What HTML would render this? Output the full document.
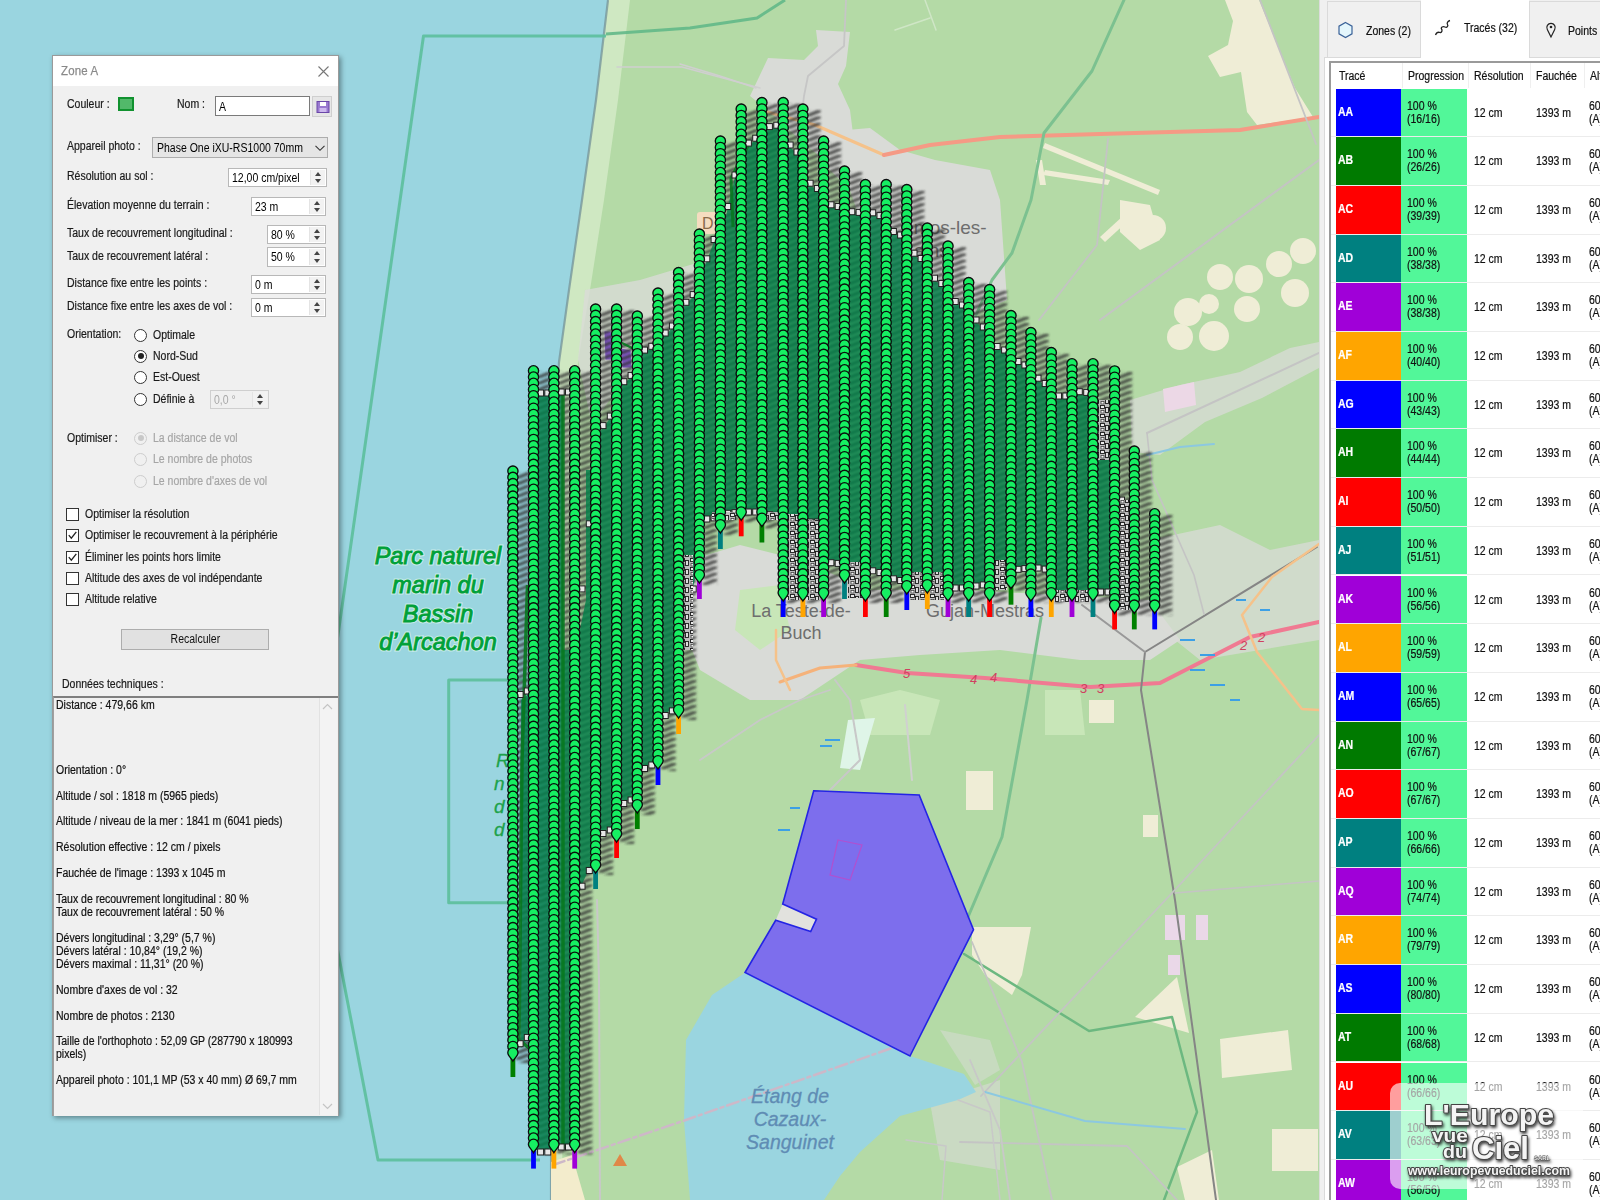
<!DOCTYPE html>
<html><head><meta charset="utf-8"><style>
*{margin:0;padding:0;box-sizing:border-box}
html,body{width:1600px;height:1200px;overflow:hidden;background:#b4daa6;font-family:"Liberation Sans",sans-serif}

#dlg{position:absolute;left:52px;top:55px;width:287px;height:1061px;background:#f0f0f0;border:1px solid #9a9a9a;box-shadow:2px 2px 5px rgba(0,0,0,0.38)}
#dlg .title{position:absolute;left:0;top:0;width:285px;height:30px;background:#fff;color:#8a8a8a;font-size:13px;padding:7px 0 0 8px;letter-spacing:0.2px}
#dlg .title span{display:inline-block;transform:scaleX(0.88);transform-origin:0 0;-webkit-text-stroke:0.25px #8a8a8a}
.sx{display:inline-block;transform:scaleX(0.875);transform-origin:0 0;white-space:nowrap}
.sx2{display:inline-block;transform:scaleX(0.875);white-space:nowrap}
.lbl{position:absolute;font-size:12px;color:#1a1a1a;-webkit-text-stroke:0.2px #1a1a1a;white-space:nowrap;line-height:15px;transform:scaleX(0.875);transform-origin:0 0}
.dlbl{color:#a6a6a6;-webkit-text-stroke:0.2px #a6a6a6}
.spin{position:absolute;border:1px solid #b8b8b8;font-size:12px}
.spin span{position:absolute;left:3px;top:2px}
.spin .sb{position:absolute;right:1px;top:1px;width:15px;bottom:1px;border-left:1px solid #e4e4e4;background:#f2f2f2}
.spin .up{position:absolute;left:4px;top:2px;width:0;height:0;border-left:3.5px solid transparent;border-right:3.5px solid transparent;border-bottom:4px solid #444}
.spin .dn{position:absolute;left:4px;bottom:2px;width:0;height:0;border-left:3.5px solid transparent;border-right:3.5px solid transparent;border-top:4px solid #444}
.tb{position:absolute;border:1px solid #7a7a7a;background:#fff;font-size:12px}
.tb span{position:absolute;left:3px;top:3px}
.combo{position:absolute;border:1px solid #adadad;background:#e5e5e5;font-size:12px}
.combo span{position:absolute;left:4px;top:3px}
.radio{position:absolute;width:13px;height:13px;border:1px solid #333;border-radius:50%;background:#fff}
.radio b{position:absolute;left:2.5px;top:2.5px;width:6px;height:6px;border-radius:50%;background:#222}
.radio.dis{border-color:#cdcdcd;background:#f0f0f0}
.radio.dis b{background:#c8c8c8}
.chk{position:absolute;width:13px;height:13px;border:1px solid #333;background:#fff}
.btn{position:absolute;border:1px solid #adadad;background:#e1e1e1;font-size:12px;text-align:center;line-height:19px;color:#111}
#techbox{position:absolute;left:53px;top:696px;width:285px;height:420px;border-top:2px solid #7f7f7f;border-left:1px solid #a0a0a0;background:#f0f0f0}
#tech{position:absolute;left:56px;top:699px;width:320px;font-size:12px;line-height:12.93px;color:#111;-webkit-text-stroke:0.2px #111;white-space:nowrap;transform:scaleX(0.875);transform-origin:0 0}


#panel{position:absolute;left:1319px;top:0;width:281px;height:1200px;background:#f0f0f0;border-left:1px solid #dcdcdc}
.tab{position:absolute;top:1px;height:56px;background:#f0f0f0;border:1px solid #dadada;border-bottom:none}
.tab span{position:absolute;font-size:12px;color:#111;-webkit-text-stroke:0.2px #111}
.tab.act{background:#fff;height:58px;top:0;border-color:#fff;z-index:2}
#tpanel{position:absolute;left:1324px;top:57px;width:280px;height:1143px;background:#fff;border-left:1px solid #dadada;border-top:1px solid #dadada}
#tbl{position:absolute;left:1329px;top:61px;width:280px;height:1139px;background:#fff;border-left:2px solid #9a9a9a;border-top:2px solid #9a9a9a;overflow:hidden}
.hd{position:absolute;top:6px;font-size:12px;color:#111;-webkit-text-stroke:0.2px #111;white-space:nowrap;transform:scaleX(0.875);transform-origin:0 0}
.vl{position:absolute;top:0;width:1px;height:25px;background:#efefef}
.row{position:absolute;left:0;width:280px;height:48.7px;border-bottom:1px solid #ececec}
.row > div{position:absolute;top:0;height:47.7px;font-size:12px;white-space:nowrap;-webkit-text-stroke:0.2px currentColor}
.c0{left:5px;width:65px;color:#fff;font-weight:bold;padding:16px 0 0 2px}
.c1{left:70px;width:66px;background:#52f799;color:#111;padding:11px 0 0 6px;line-height:13px}
.c2{left:137px;width:62px;padding:17px 0 0 6px;color:#111}
.c3{left:199px;width:54px;padding:17px 0 0 6px;color:#111}
.c4{left:253px;width:40px;padding:11px 0 0 5px;line-height:13px;color:#111}
#wm{position:absolute;left:1390px;top:1083px;width:210px;height:110px}
.wmbox{position:absolute;left:0;top:0;width:193px;height:106px;background:rgba(255,255,255,0.62);border-radius:10px}

</style></head>
<body>
<svg width="1319" height="1200" viewBox="0 0 1319 1200" style="position:absolute;left:0;top:0">
<defs>
<pattern id="mk" width="10" height="9" patternUnits="userSpaceOnUse"><rect width="10" height="9" fill="#bdbdbd"/><rect x="0.5" y="0.5" width="4" height="3" fill="#ececec" stroke="#1a1a1a" stroke-width="0.9"/><rect x="5.5" y="2.5" width="3" height="5" fill="#dcdcdc" stroke="#1a1a1a" stroke-width="0.9"/><rect x="1" y="5.5" width="3" height="2.5" fill="#f4f4f4" stroke="#333" stroke-width="0.7"/></pattern>
<pattern id="shpat" width="14" height="6.25" patternUnits="userSpaceOnUse">
<ellipse cx="6.5" cy="3.1" rx="5.2" ry="2.8" fill="#2a2a2a" fill-opacity="0.8" transform="rotate(-20 6.5 3.1)"/>
</pattern>
<filter id="soft1" x="-2%" y="-2%" width="104%" height="104%"><feGaussianBlur stdDeviation="0.35"/></filter>
<filter id="blur1" x="-10%" y="-2%" width="120%" height="104%"><feGaussianBlur stdDeviation="1.1"/></filter>
</defs>
<rect width="1319" height="1200" fill="#b4daa6"/>
<!-- sea -->
<path d="M0 0 L608 0 L596 100 L582 200 L569 290 L559 362 L554 450 L552 600 L551 1200 L0 1200Z" fill="#9ad5e0"/>
<!-- beach strip -->
<path d="M608 0 L630 0 L618 100 L604 200 L590 290 L578 362 L570 450 L566 600 L564 900 L562 1200 L551 1200 L552 600 L554 450 L559 362 L569 290 L582 200 L596 100Z" fill="#cfe8c2"/>
<path d="M608 0 L596 100 L582 200 L569 290 L559 362 L554 450 L552 600 L551 1200" fill="none" stroke="#74939a" stroke-width="2.2" opacity="0.75"/>
<path d="M551 1162 L572 1155 L585 1200 L551 1200Z" fill="#f3eccc"/>
<!-- park outline -->
<g fill="none" stroke="#5cbf9c" stroke-width="3" opacity="0.9" stroke-linejoin="round">
<path d="M606 36 L423.5 36 L312 817 L378 1160 L540 1160"/>
<path d="M540 680 L448.7 680 L448.7 902.7 L540 902.7"/>
</g>
<path d="M606 34 L690 28 L757 18 L785 0" fill="none" stroke="#62b888" stroke-width="3" opacity="0.9"/>
<g font-family="Liberation Sans" font-style="italic" font-size="19" fill="#1da24a" stroke="#1da24a" stroke-width="0.3"><text x="496" y="767">R</text><text x="494" y="790">n</text><text x="494" y="813">d</text><text x="494" y="836">d</text></g>
<g font-family="Liberation Sans" font-style="italic" font-size="23.5" fill="none" stroke="#dff5ee" stroke-opacity="0.7" stroke-width="3" text-anchor="middle">
<text x="438" y="563.5">Parc naturel</text>
<text x="438" y="593">marin du</text>
<text x="438" y="621.5">Bassin</text>
<text x="438" y="650">d’Arcachon</text>
</g><g font-family="Liberation Sans" font-style="italic" font-size="23.5" fill="#00a038" stroke="#00a038" stroke-width="0.9" text-anchor="middle">
<text x="438" y="563.5">Parc naturel</text>
<text x="438" y="593">marin du</text>
<text x="438" y="621.5">Bassin</text>
<text x="438" y="650">d’Arcachon</text>
</g>
<!-- urban grey -->
<g fill="#d9dbd7">
<path d="M750 96 L768 58 L804 60 L818 46 L816 30 L850 32 L846 66 L838 84 L850 110 L855 150 L830 165 L800 140 L770 112Z"/>
<path d="M824 132 L870 128 L900 150 L935 160 L990 170 L1000 200 L1007 300 L960 320 L905 300 L870 250 L850 190 L830 170Z"/>
<path d="M690 560 L740 545 L800 560 L870 590 L960 590 L1060 595 L1150 600 L1180 640 L1150 660 L1080 660 L1000 650 L920 655 L860 660 L800 700 L750 700 L700 670 L680 620Z"/>
<path d="M1130 400 L1180 385 L1240 372 L1290 348 L1319 342 L1319 368 L1262 398 L1205 422 L1160 455 L1132 452Z" opacity="0.75"/><path d="M1150 540 L1220 525 L1270 550 L1319 540 L1319 640 L1200 660 L1150 620Z" opacity="0.75"/>
<path d="M1163 389 L1194 382 L1196 405 L1165 412Z" fill="#ecd8e6"/>
<path d="M585 290 L640 280 L700 262 L722 245 L715 300 L660 340 L620 385 L592 425 L578 360Z" opacity="0.8"/>
<path d="M930 1102 L1000 1080 L1000 1170 L940 1160Z" opacity="0.6"/><path d="M940 1030 L990 1040 L1000 1070 L975 1085Z" opacity="0.5"/><path d="M1165 915 L1185 915 L1185 940 L1165 940Z M1168 955 L1180 955 L1180 975 L1168 975Z M1196 915 L1208 915 L1208 940 L1196 940Z" fill="#ead8e8"/>
<path d="M780 1060 L830 1040 L850 1090 L800 1100Z" opacity="0.4"/>
</g>
<!-- light green patches -->
<g fill="#c8e6b8">
<path d="M740 590 L780 585 L790 630 L760 650 L735 630Z"/>
<path d="M860 700 L900 690 L940 700 L930 735 L870 735Z"/>
<path d="M1045 690 L1080 690 L1085 735 L1045 735Z"/>
</g>
<path d="M848 720 L875 718 L860 770 L840 768Z" fill="#dff5e8"/>
<!-- cream areas -->
<g fill="#efedd6">
<path d="M1225 0 L1259 0 L1295 88 L1313 117 L1257 125 L1247 112 L1241 72 L1220 77 L1208 56 L1228 45 L1233 21Z"/>
<circle cx="1220" cy="277" r="13"/><circle cx="1249" cy="279" r="14"/><circle cx="1279" cy="264" r="13"/><circle cx="1303" cy="251" r="13"/><circle cx="1295" cy="293" r="14"/>
<circle cx="1188" cy="312" r="14"/><circle cx="1209" cy="304" r="10"/><circle cx="1247" cy="309" r="13"/><circle cx="1214" cy="336" r="15"/><circle cx="1180" cy="337" r="13"/>
<circle cx="1153" cy="228" r="13"/>
<path d="M1120 200 L1150 205 L1160 240 L1140 250 L1120 232Z"/>
<path d="M1045 143 L1160 190 L1158 195 L1043 148Z"/>
<path d="M1045 170 L1110 180 L1108 185 L1043 175Z"/>
<path d="M1042 160 L1046 185 L1040 185 L1036 160Z"/>
<path d="M1100 237 L1135 205 L1140 210 L1105 242Z"/>
<rect x="966" y="771" width="27" height="39"/>
<path d="M972 927 L1031 927 L1022 975 L1012 995 L985 975 L972 955Z"/><rect x="1143" y="815" width="15" height="22"/><rect x="1089" y="700" width="25" height="23"/><path d="M1135 1017 L1177 977 L1189 1033Z"/><rect x="1272" y="1129" width="46" height="42"/><path d="M1177 1167 L1212 1150 L1219 1200 L1185 1200Z"/>
<path d="M1220 1039 L1288 1030 L1292 1070 L1222 1078Z"/>


</g>
<!-- lagoon -->
<path d="M746 972 L910 1056 L964 1074 L976 1092 L958 1100 L900 1116 L860 1152 L840 1176 L824 1200 L690 1200 L684 1120 L686 1040 L712 995Z" fill="#9ad5e0"/>
<!-- roads -->
<g fill="none" stroke-linecap="round" stroke-linejoin="round">
<path d="M760 110 L815 125 L884 155" stroke="#f5c28a" stroke-width="3"/>
<path d="M884 155 L930 145 L1000 137 L1100 134 L1240 130 L1319 117" stroke="#f59a85" stroke-width="4"/>
<path d="M1124 0 L1092 71 L1044 133 L1031 200 L1012 253 L992 280 L960 350 L935 410" stroke="#7cc190" stroke-width="3"/>
<path d="M1041 618 L1027 700 L1002 837 L968 917" stroke="#7cc190" stroke-width="3"/>
<path d="M964 954 L1089 1031 L1172 1017 L1197 1112 L1164 1200" stroke="#6cb880" stroke-width="2.5"/>
<path d="M856 665 L907 673 L985 678 L1090 687 L1160 683 L1250 637 L1319 622" stroke="#f07a92" stroke-width="4"/>
<path d="M780 682 L820 668 L856 665" stroke="#f5b27a" stroke-width="3"/>
<path d="M776 630 L776 660 L790 690" stroke="#f5c28a" stroke-width="2.5"/>
<path d="M1317 547 L1145 652 L1141 690 L1175 900 L1216 1200" stroke="#858585" stroke-width="2"/>
<path d="M1082 605 L1145 652" stroke="#999" stroke-width="2"/>
<path d="M1319 544 L1272 577 L1242 615 L1257 652 L1302 709 L1319 710" stroke="#f5c28a" stroke-width="2.5"/>
<path d="M1319 160 L1100 320" stroke="#c4c4c4" stroke-width="2"/>
<path d="M1260 0 L1316 144" stroke="#c4c4c4" stroke-width="1.8"/>
<path d="M1108 139 L1097 245 L1039 320" stroke="#c4c4c4" stroke-width="1.8"/>
<path d="M1319 735 L1172 893 L981 1096" stroke="#c4c4c4" stroke-width="1.8"/><path d="M972 942 L1022 1062 L1052 1200" stroke="#c4c4c4" stroke-width="1.8"/><path d="M960 1142 L1127 1146 L1177 1200" stroke="#c4c4c4" stroke-width="1.8"/><path d="M985 1092 L1085 1121 L1185 1129" stroke="#8cc8e0" stroke-width="2"/>
<path d="M1175 893 L1319 881" stroke="#c4c4c4" stroke-width="1.5"/>
<path d="M1147 433 L1319 353" stroke="#c4c4c4" stroke-width="2"/><path d="M1147 433 L1152 480 L1194 575 L1204 614" stroke="#c4c4c4" stroke-width="1.6"/><path d="M1147 455 L1180 447 L1214 444" stroke="#8cc8e0" stroke-width="2"/>
<path d="M553 1165 L680 1122 L892 1048" stroke="#cdb8c8" stroke-width="2.5" stroke-dasharray="12 4 3 4"/>
<path d="M905 705 L912 780" stroke="#d0d0d0" stroke-width="2"/><path d="M597 900 L599 980 L600 1200" stroke="#c8c8c8" stroke-width="2"/>
<path d="M835 680 L850 700 L860 760 L830 790" stroke="#c8c8c8" stroke-width="2"/>
<path d="M700 760 L760 720 L800 700 L830 690" stroke="#c8c8c8" stroke-width="1.8"/>
<path d="M617 67 L682 67 L760 88" stroke="#cfcfcf" stroke-width="1.5"/>
<path d="M846 0 L844 46 L808 76 L804 96 L800 130" stroke="#c6c6c6" stroke-width="1.8"/><path d="M680 64 L720 76 L756 88" stroke="#cfcfcf" stroke-width="1.5"/><path d="M925 0 L936 30 M895 30 L930 18" stroke="#cfe6c6" stroke-width="1.5"/>
<path d="M970 1060 L1000 1130 L1010 1200" stroke="#c8c8c8" stroke-width="1.8"/>
<path d="M906 1140 L946 1146 L942 1200 M958 1100 L990 1112 L1000 1200" stroke="#c8c8c8" stroke-width="1.5"/>
</g>
<!-- blue streams -->
<g stroke="#3ca0e6" stroke-width="2" fill="none">
<path d="M1180 640 L1195 640 M1200 655 L1215 655 M1190 670 L1205 670 M1210 685 L1225 685 M1230 700 L1240 700 M1236 600 L1246 600 M1260 610 L1270 610"/>
<path d="M825 740 L840 740 M820 746 L832 746 M790 808 L800 808 M778 830 L790 830"/>
</g>
<!-- blue polygon -->
<path d="M782.7 904 L816.5 919.2 L810.7 931.5 L775.7 920.3Z" fill="#e2e2de"/>
<path d="M813.7 790.8 L919.2 795 L973.5 929.6 L910 1056 L745 972.5 L775.7 920.3 L810.7 931.5 L816.5 919.2 L782.7 904Z" fill="#6f53ff" fill-opacity="0.8" stroke="#2424e4" stroke-width="1.6"/>
<path d="M838 840 L862 845 L850 880 L830 875Z" fill="none" stroke="#b050d0" stroke-width="1.2"/>
<g font-family="Liberation Sans" font-size="18" fill="#6e6e6e" text-anchor="middle">
<text x="801" y="617">La Teste-de-</text>
<text x="801" y="639">Buch</text>
<text x="985" y="617">Gujan-Mestras</text>
<text x="945" y="234" font-size="19">emos-les-</text><text x="925" y="257" font-size="19">Bains</text>
</g>
<rect x="697" y="212" width="24" height="22" rx="3" fill="#f5dcc0"/>
<text x="702" y="229" font-family="Liberation Sans" font-size="16" fill="#8a6a4a">D</text>
<g font-family="Liberation Sans" font-style="italic" font-size="19.5" fill="#5f8cb4" stroke="#5f8cb4" stroke-width="0.3" text-anchor="middle">
<text x="790" y="1103">Étang de</text>
<text x="790" y="1126">Cazaux-</text>
<text x="790" y="1149">Sanguinet</text>
</g>
<g font-family="Liberation Sans" font-style="italic" font-size="13" fill="#d04060">
<text x="903" y="678">5</text><text x="970" y="684">4</text><text x="990" y="682">4</text>
<text x="1080" y="693">3</text><text x="1097" y="693">3</text><text x="1240" y="650">2</text><text x="1258" y="642">2</text>
</g>
<path d="M620 1154 L627 1166 L613 1166Z" fill="#e08848"/>
<path d="M604 331 L611 331 L613 345 L615 360 L605 360Z M621 348 L631 350 L632 368 L622 368Z" fill="#8a5cd6" stroke="#fff" stroke-width="0.8"/>
<defs><pattern id="sh0" x="515.9" y="466.00" width="15" height="6.25" patternUnits="userSpaceOnUse"><path d="M1.5 5.6 L13.5 0.7" stroke="#303030" stroke-opacity="0.8" stroke-width="3.4" stroke-linecap="round"/></pattern><pattern id="sh1" x="536.5" y="365.70" width="15" height="6.25" patternUnits="userSpaceOnUse"><path d="M1.5 5.6 L13.5 0.7" stroke="#303030" stroke-opacity="0.8" stroke-width="3.4" stroke-linecap="round"/></pattern><pattern id="sh2" x="556.9" y="365.70" width="15" height="6.25" patternUnits="userSpaceOnUse"><path d="M1.5 5.6 L13.5 0.7" stroke="#303030" stroke-opacity="0.8" stroke-width="3.4" stroke-linecap="round"/></pattern><pattern id="sh3" x="577.7" y="365.70" width="15" height="6.25" patternUnits="userSpaceOnUse"><path d="M1.5 5.6 L13.5 0.7" stroke="#303030" stroke-opacity="0.8" stroke-width="3.4" stroke-linecap="round"/></pattern><pattern id="sh4" x="598.6" y="304.00" width="15" height="6.25" patternUnits="userSpaceOnUse"><path d="M1.5 5.6 L13.5 0.7" stroke="#303030" stroke-opacity="0.8" stroke-width="3.4" stroke-linecap="round"/></pattern><pattern id="sh5" x="619.6" y="304.00" width="15" height="6.25" patternUnits="userSpaceOnUse"><path d="M1.5 5.6 L13.5 0.7" stroke="#303030" stroke-opacity="0.8" stroke-width="3.4" stroke-linecap="round"/></pattern><pattern id="sh6" x="640.3" y="311.00" width="15" height="6.25" patternUnits="userSpaceOnUse"><path d="M1.5 5.6 L13.5 0.7" stroke="#303030" stroke-opacity="0.8" stroke-width="3.4" stroke-linecap="round"/></pattern><pattern id="sh7" x="661.0" y="288.00" width="15" height="6.25" patternUnits="userSpaceOnUse"><path d="M1.5 5.6 L13.5 0.7" stroke="#303030" stroke-opacity="0.8" stroke-width="3.4" stroke-linecap="round"/></pattern><pattern id="sh8" x="681.6" y="267.50" width="15" height="6.25" patternUnits="userSpaceOnUse"><path d="M1.5 5.6 L13.5 0.7" stroke="#303030" stroke-opacity="0.8" stroke-width="3.4" stroke-linecap="round"/></pattern><pattern id="sh9" x="702.4" y="229.00" width="15" height="6.25" patternUnits="userSpaceOnUse"><path d="M1.5 5.6 L13.5 0.7" stroke="#303030" stroke-opacity="0.8" stroke-width="3.4" stroke-linecap="round"/></pattern><pattern id="sh10" x="723.4" y="136.00" width="15" height="6.25" patternUnits="userSpaceOnUse"><path d="M1.5 5.6 L13.5 0.7" stroke="#303030" stroke-opacity="0.8" stroke-width="3.4" stroke-linecap="round"/></pattern><pattern id="sh11" x="744.2" y="104.00" width="15" height="6.25" patternUnits="userSpaceOnUse"><path d="M1.5 5.6 L13.5 0.7" stroke="#303030" stroke-opacity="0.8" stroke-width="3.4" stroke-linecap="round"/></pattern><pattern id="sh12" x="764.9" y="97.50" width="15" height="6.25" patternUnits="userSpaceOnUse"><path d="M1.5 5.6 L13.5 0.7" stroke="#303030" stroke-opacity="0.8" stroke-width="3.4" stroke-linecap="round"/></pattern><pattern id="sh13" x="786.2" y="97.50" width="15" height="6.25" patternUnits="userSpaceOnUse"><path d="M1.5 5.6 L13.5 0.7" stroke="#303030" stroke-opacity="0.8" stroke-width="3.4" stroke-linecap="round"/></pattern><pattern id="sh14" x="805.9" y="104.00" width="15" height="6.25" patternUnits="userSpaceOnUse"><path d="M1.5 5.6 L13.5 0.7" stroke="#303030" stroke-opacity="0.8" stroke-width="3.4" stroke-linecap="round"/></pattern><pattern id="sh15" x="826.6" y="136.00" width="15" height="6.25" patternUnits="userSpaceOnUse"><path d="M1.5 5.6 L13.5 0.7" stroke="#303030" stroke-opacity="0.8" stroke-width="3.4" stroke-linecap="round"/></pattern><pattern id="sh16" x="847.5" y="166.00" width="15" height="6.25" patternUnits="userSpaceOnUse"><path d="M1.5 5.6 L13.5 0.7" stroke="#303030" stroke-opacity="0.8" stroke-width="3.4" stroke-linecap="round"/></pattern><pattern id="sh17" x="868.4" y="179.50" width="15" height="6.25" patternUnits="userSpaceOnUse"><path d="M1.5 5.6 L13.5 0.7" stroke="#303030" stroke-opacity="0.8" stroke-width="3.4" stroke-linecap="round"/></pattern><pattern id="sh18" x="889.2" y="179.50" width="15" height="6.25" patternUnits="userSpaceOnUse"><path d="M1.5 5.6 L13.5 0.7" stroke="#303030" stroke-opacity="0.8" stroke-width="3.4" stroke-linecap="round"/></pattern><pattern id="sh19" x="909.8" y="184.50" width="15" height="6.25" patternUnits="userSpaceOnUse"><path d="M1.5 5.6 L13.5 0.7" stroke="#303030" stroke-opacity="0.8" stroke-width="3.4" stroke-linecap="round"/></pattern><pattern id="sh20" x="930.3" y="223.00" width="15" height="6.25" patternUnits="userSpaceOnUse"><path d="M1.5 5.6 L13.5 0.7" stroke="#303030" stroke-opacity="0.8" stroke-width="3.4" stroke-linecap="round"/></pattern><pattern id="sh21" x="951.0" y="241.00" width="15" height="6.25" patternUnits="userSpaceOnUse"><path d="M1.5 5.6 L13.5 0.7" stroke="#303030" stroke-opacity="0.8" stroke-width="3.4" stroke-linecap="round"/></pattern><pattern id="sh22" x="971.7" y="277.50" width="15" height="6.25" patternUnits="userSpaceOnUse"><path d="M1.5 5.6 L13.5 0.7" stroke="#303030" stroke-opacity="0.8" stroke-width="3.4" stroke-linecap="round"/></pattern><pattern id="sh23" x="992.6" y="284.50" width="15" height="6.25" patternUnits="userSpaceOnUse"><path d="M1.5 5.6 L13.5 0.7" stroke="#303030" stroke-opacity="0.8" stroke-width="3.4" stroke-linecap="round"/></pattern><pattern id="sh24" x="1014.0" y="310.50" width="15" height="6.25" patternUnits="userSpaceOnUse"><path d="M1.5 5.6 L13.5 0.7" stroke="#303030" stroke-opacity="0.8" stroke-width="3.4" stroke-linecap="round"/></pattern><pattern id="sh25" x="1033.9" y="327.50" width="15" height="6.25" patternUnits="userSpaceOnUse"><path d="M1.5 5.6 L13.5 0.7" stroke="#303030" stroke-opacity="0.8" stroke-width="3.4" stroke-linecap="round"/></pattern><pattern id="sh26" x="1054.3" y="347.50" width="15" height="6.25" patternUnits="userSpaceOnUse"><path d="M1.5 5.6 L13.5 0.7" stroke="#303030" stroke-opacity="0.8" stroke-width="3.4" stroke-linecap="round"/></pattern><pattern id="sh27" x="1075.0" y="358.70" width="15" height="6.25" patternUnits="userSpaceOnUse"><path d="M1.5 5.6 L13.5 0.7" stroke="#303030" stroke-opacity="0.8" stroke-width="3.4" stroke-linecap="round"/></pattern><pattern id="sh28" x="1096.0" y="358.70" width="15" height="6.25" patternUnits="userSpaceOnUse"><path d="M1.5 5.6 L13.5 0.7" stroke="#303030" stroke-opacity="0.8" stroke-width="3.4" stroke-linecap="round"/></pattern><pattern id="sh29" x="1117.6" y="365.80" width="15" height="6.25" patternUnits="userSpaceOnUse"><path d="M1.5 5.6 L13.5 0.7" stroke="#303030" stroke-opacity="0.8" stroke-width="3.4" stroke-linecap="round"/></pattern><pattern id="sh30" x="1137.3" y="446.00" width="15" height="6.25" patternUnits="userSpaceOnUse"><path d="M1.5 5.6 L13.5 0.7" stroke="#303030" stroke-opacity="0.8" stroke-width="3.4" stroke-linecap="round"/></pattern><pattern id="sh31" x="1157.7" y="508.70" width="15" height="6.25" patternUnits="userSpaceOnUse"><path d="M1.5 5.6 L13.5 0.7" stroke="#303030" stroke-opacity="0.8" stroke-width="3.4" stroke-linecap="round"/></pattern></defs>
<g filter="url(#blur1)"><rect x="515.9" y="472.0" width="15" height="591.0" fill="url(#sh0)"/><rect x="536.5" y="371.7" width="15" height="782.9" fill="url(#sh1)"/><rect x="556.9" y="371.7" width="15" height="782.9" fill="url(#sh2)"/><rect x="577.7" y="371.7" width="15" height="782.9" fill="url(#sh3)"/><rect x="598.6" y="310.0" width="15" height="565.0" fill="url(#sh4)"/><rect x="619.6" y="310.0" width="15" height="534.0" fill="url(#sh5)"/><rect x="640.3" y="317.0" width="15" height="498.0" fill="url(#sh6)"/><rect x="661.0" y="294.0" width="15" height="477.0" fill="url(#sh7)"/><rect x="681.6" y="273.5" width="15" height="446.5" fill="url(#sh8)"/><rect x="702.4" y="235.0" width="15" height="350.0" fill="url(#sh9)"/><rect x="723.4" y="142.0" width="15" height="393.0" fill="url(#sh10)"/><rect x="744.2" y="110.0" width="15" height="412.3" fill="url(#sh11)"/><rect x="764.9" y="103.5" width="15" height="425.0" fill="url(#sh12)"/><rect x="786.2" y="103.5" width="15" height="499.5" fill="url(#sh13)"/><rect x="805.9" y="110.0" width="15" height="493.0" fill="url(#sh14)"/><rect x="826.6" y="142.0" width="15" height="461.0" fill="url(#sh15)"/><rect x="847.5" y="172.0" width="15" height="413.0" fill="url(#sh16)"/><rect x="868.4" y="185.5" width="15" height="417.5" fill="url(#sh17)"/><rect x="889.2" y="185.5" width="15" height="417.5" fill="url(#sh18)"/><rect x="909.8" y="190.5" width="15" height="405.5" fill="url(#sh19)"/><rect x="930.3" y="229.0" width="15" height="366.0" fill="url(#sh20)"/><rect x="951.0" y="247.0" width="15" height="356.0" fill="url(#sh21)"/><rect x="971.7" y="283.5" width="15" height="319.5" fill="url(#sh22)"/><rect x="992.6" y="290.5" width="15" height="312.5" fill="url(#sh23)"/><rect x="1014.0" y="316.5" width="15" height="274.2" fill="url(#sh24)"/><rect x="1033.9" y="333.5" width="15" height="269.5" fill="url(#sh25)"/><rect x="1054.3" y="353.5" width="15" height="249.5" fill="url(#sh26)"/><rect x="1075.0" y="364.7" width="15" height="238.3" fill="url(#sh27)"/><rect x="1096.0" y="364.7" width="15" height="238.3" fill="url(#sh28)"/><rect x="1117.6" y="371.8" width="15" height="243.6" fill="url(#sh29)"/><rect x="1137.3" y="452.0" width="15" height="163.4" fill="url(#sh30)"/><rect x="1157.7" y="514.7" width="15" height="100.7" fill="url(#sh31)"/></g>
<g fill="#008048" fill-opacity="0.8"><path d="M521.0 700 L533.5 690 L533.5 1030 L521.0 1048Z"/><path d="M533.5 395 L553.9 395 L553.9 1150 L533.5 1150Z"/><path d="M553.9 394 L563 394 L563 1145 L553.9 1145Z"/><path d="M563 650 L574.7 650 L574.7 1145 L563 1145Z"/><path d="M574.7 655 L586 600 L586 470 L595.6 470 L595.6 855 L574.7 900Z"/><path d="M595.6 437 L616.6 410 L616.6 825 L595.6 835Z"/><path d="M616.6 390 L637.3 372 L637.3 795 L616.6 805Z"/><path d="M637.3 356 L658.0 345 L658.0 760 L637.3 770Z"/><path d="M658.0 342 L678.6 322 L678.6 705 L658.0 718Z"/><path d="M678.6 312 L699.4 290 L699.4 560 L678.6 650Z"/><path d="M699.4 280 L720.4 225 L720.4 515 L699.4 518Z"/><path d="M720.4 240 L741.2 150 L741.2 510 L720.4 512Z"/><path d="M741.2 150 L761.9 136 L761.9 510 L741.2 510Z"/><path d="M761.9 130 L783.2 126 L783.2 514 L761.9 512Z"/><path d="M783.2 140 L802.9 160 L802.9 520 L783.2 518Z"/><path d="M802.9 180 L823.6 195 L823.6 520 L802.9 520Z"/><path d="M823.6 205 L844.5 210 L844.5 562 L823.6 560Z"/><path d="M844.5 213 L865.4 215 L865.4 565 L844.5 564Z"/><path d="M865.4 212 L886.2 220 L886.2 572 L865.4 567Z"/><path d="M886.2 230 L906.8 240 L906.8 580 L886.2 575Z"/><path d="M906.8 250 L927.3 265 L927.3 583 L906.8 580Z"/><path d="M927.3 275 L948.0 290 L948.0 586 L927.3 584Z"/><path d="M948.0 300 L968.7 310 L968.7 586 L948.0 586Z"/><path d="M968.7 315 L989.6 335 L989.6 582 L968.7 585Z"/><path d="M989.6 345 L1011.0 355 L1011.0 576 L989.6 580Z"/><path d="M1011.0 360 L1030.9 370 L1030.9 566 L1011.0 568Z"/><path d="M1030.9 375 L1051.3 390 L1051.3 568 L1030.9 565Z"/><path d="M1051.3 398 L1072.0 398 L1072.0 595 L1051.3 595Z"/><path d="M1072.0 393 L1093.0 395 L1093.0 590 L1072.0 595Z"/><path d="M1093.0 400 L1114.6 480 L1114.6 590 L1093.0 590Z"/><path d="M1114.6 487 L1134.3 530 L1134.3 600 L1114.6 602Z"/></g>
<g fill="none" stroke="#07781f" stroke-width="3.5" stroke-opacity="0.9"><path d="M527.5 585 L522 760 L519 1040 L534 1052"/><path d="M563 394 L563 1148"/><path d="M748 146 L731 178 L733 227" stroke-width="3"/><path d="M620 342 L634 349" stroke-width="2.5"/></g>
<g fill="#e8e8e8" stroke="#222" stroke-width="1"><rect x="517.1" y="691.5" width="6" height="6"/><rect x="517.1" y="1040.7" width="6" height="6"/><rect x="524.3" y="688.0" width="6" height="6"/><rect x="524.3" y="1034.4" width="6" height="6"/><rect x="537.6" y="390.0" width="6" height="6"/><rect x="537.6" y="1149.0" width="6" height="6"/><rect x="544.8" y="390.0" width="6" height="6"/><rect x="544.8" y="1149.0" width="6" height="6"/><rect x="558.2" y="389.0" width="6" height="6"/><rect x="558.2" y="1144.0" width="6" height="6"/><rect x="565.5" y="389.0" width="6" height="6"/><rect x="565.5" y="1144.0" width="6" height="6"/><rect x="579.0" y="585.9" width="6" height="6"/><rect x="579.0" y="883.2" width="6" height="6"/><rect x="586.3" y="520.8" width="6" height="6"/><rect x="586.3" y="867.5" width="6" height="6"/><rect x="600.0" y="422.6" width="6" height="6"/><rect x="600.0" y="830.5" width="6" height="6"/><rect x="607.3" y="413.1" width="6" height="6"/><rect x="607.3" y="827.0" width="6" height="6"/><rect x="620.8" y="378.7" width="6" height="6"/><rect x="620.8" y="800.5" width="6" height="6"/><rect x="628.1" y="372.4" width="6" height="6"/><rect x="628.1" y="797.0" width="6" height="6"/><rect x="641.5" y="347.1" width="6" height="6"/><rect x="641.5" y="765.5" width="6" height="6"/><rect x="648.8" y="343.3" width="6" height="6"/><rect x="648.8" y="762.0" width="6" height="6"/><rect x="662.2" y="330.0" width="6" height="6"/><rect x="662.2" y="712.5" width="6" height="6"/><rect x="669.4" y="323.0" width="6" height="6"/><rect x="669.4" y="707.9" width="6" height="6"/><rect x="682.9" y="299.3" width="6" height="6"/><rect x="682.9" y="617.5" width="6" height="6"/><rect x="690.2" y="291.6" width="6" height="6"/><rect x="690.2" y="586.0" width="6" height="6"/><rect x="703.8" y="255.8" width="6" height="6"/><rect x="703.8" y="516.0" width="6" height="6"/><rect x="711.1" y="236.5" width="6" height="6"/><rect x="711.1" y="514.9" width="6" height="6"/><rect x="724.7" y="203.5" width="6" height="6"/><rect x="724.7" y="510.3" width="6" height="6"/><rect x="732.0" y="172.0" width="6" height="6"/><rect x="732.0" y="509.6" width="6" height="6"/><rect x="745.4" y="140.1" width="6" height="6"/><rect x="745.4" y="509.0" width="6" height="6"/><rect x="752.7" y="135.2" width="6" height="6"/><rect x="752.7" y="509.0" width="6" height="6"/><rect x="766.4" y="123.6" width="6" height="6"/><rect x="766.4" y="511.7" width="6" height="6"/><rect x="773.8" y="122.2" width="6" height="6"/><rect x="773.8" y="512.4" width="6" height="6"/><rect x="787.1" y="142.0" width="6" height="6"/><rect x="787.1" y="517.7" width="6" height="6"/><rect x="794.0" y="149.0" width="6" height="6"/><rect x="794.0" y="518.4" width="6" height="6"/><rect x="807.1" y="180.2" width="6" height="6"/><rect x="807.1" y="519.0" width="6" height="6"/><rect x="814.4" y="185.5" width="6" height="6"/><rect x="814.4" y="519.0" width="6" height="6"/><rect x="827.9" y="201.8" width="6" height="6"/><rect x="827.9" y="559.7" width="6" height="6"/><rect x="835.2" y="203.5" width="6" height="6"/><rect x="835.2" y="560.4" width="6" height="6"/><rect x="848.8" y="208.7" width="6" height="6"/><rect x="848.8" y="563.4" width="6" height="6"/><rect x="856.1" y="209.4" width="6" height="6"/><rect x="856.1" y="563.7" width="6" height="6"/><rect x="869.7" y="209.8" width="6" height="6"/><rect x="869.7" y="567.8" width="6" height="6"/><rect x="877.0" y="212.6" width="6" height="6"/><rect x="877.0" y="569.5" width="6" height="6"/><rect x="890.4" y="228.5" width="6" height="6"/><rect x="890.4" y="575.8" width="6" height="6"/><rect x="897.6" y="232.0" width="6" height="6"/><rect x="897.6" y="577.5" width="6" height="6"/><rect x="911.0" y="250.2" width="6" height="6"/><rect x="911.0" y="580.0" width="6" height="6"/><rect x="918.1" y="255.5" width="6" height="6"/><rect x="918.1" y="581.1" width="6" height="6"/><rect x="931.5" y="275.2" width="6" height="6"/><rect x="931.5" y="583.7" width="6" height="6"/><rect x="938.8" y="280.5" width="6" height="6"/><rect x="938.8" y="584.4" width="6" height="6"/><rect x="952.2" y="298.5" width="6" height="6"/><rect x="952.2" y="585.0" width="6" height="6"/><rect x="959.5" y="302.0" width="6" height="6"/><rect x="959.5" y="585.0" width="6" height="6"/><rect x="973.0" y="317.0" width="6" height="6"/><rect x="973.0" y="583.0" width="6" height="6"/><rect x="980.3" y="324.0" width="6" height="6"/><rect x="980.3" y="581.9" width="6" height="6"/><rect x="994.1" y="343.5" width="6" height="6"/><rect x="994.1" y="577.6" width="6" height="6"/><rect x="1001.6" y="347.0" width="6" height="6"/><rect x="1001.6" y="576.2" width="6" height="6"/><rect x="1015.0" y="358.5" width="6" height="6"/><rect x="1015.0" y="566.3" width="6" height="6"/><rect x="1021.9" y="362.0" width="6" height="6"/><rect x="1021.9" y="565.6" width="6" height="6"/><rect x="1035.0" y="375.2" width="6" height="6"/><rect x="1035.0" y="565.0" width="6" height="6"/><rect x="1042.2" y="380.5" width="6" height="6"/><rect x="1042.2" y="566.1" width="6" height="6"/><rect x="1055.5" y="393.0" width="6" height="6"/><rect x="1055.5" y="594.0" width="6" height="6"/><rect x="1062.8" y="393.0" width="6" height="6"/><rect x="1062.8" y="594.0" width="6" height="6"/><rect x="1076.3" y="388.7" width="6" height="6"/><rect x="1076.3" y="592.2" width="6" height="6"/><rect x="1083.7" y="389.4" width="6" height="6"/><rect x="1083.7" y="590.5" width="6" height="6"/><rect x="1097.6" y="423.0" width="6" height="6"/><rect x="1097.6" y="589.0" width="6" height="6"/><rect x="1105.1" y="451.0" width="6" height="6"/><rect x="1105.1" y="589.0" width="6" height="6"/><rect x="1118.5" y="497.1" width="6" height="6"/><rect x="1118.5" y="600.3" width="6" height="6"/><rect x="1125.4" y="512.1" width="6" height="6"/><rect x="1125.4" y="599.6" width="6" height="6"/></g>
<g fill="url(#mk)"><rect x="786" y="514" width="14" height="86"/><rect x="806" y="520" width="14" height="80"/><rect x="683" y="555" width="10" height="95"/><rect x="848" y="562" width="14" height="36"/><rect x="910" y="572" width="34" height="28"/><rect x="993" y="560" width="14" height="30"/><rect x="1055" y="590" width="34" height="12"/><rect x="1118" y="500" width="14" height="110"/><rect x="1097" y="400" width="12" height="60"/><rect x="757" y="512" width="22" height="8"/><rect x="712" y="512" width="24" height="8"/></g>
<g filter="url(#soft1)">
<rect x="510.5" y="1058.0" width="4.8" height="19.0" fill="#008000"/>
<g fill="#14ef62" stroke="#080808" stroke-width="1.3"><circle cx="512.9" cy="471.10" r="5.1"/><circle cx="512.9" cy="477.35" r="5.1"/><circle cx="512.9" cy="483.61" r="5.1"/><circle cx="512.9" cy="489.86" r="5.1"/><circle cx="512.9" cy="496.12" r="5.1"/><circle cx="512.9" cy="502.37" r="5.1"/><circle cx="512.9" cy="508.62" r="5.1"/><circle cx="512.9" cy="514.88" r="5.1"/><circle cx="512.9" cy="521.13" r="5.1"/><circle cx="512.9" cy="527.38" r="5.1"/><circle cx="512.9" cy="533.64" r="5.1"/><circle cx="512.9" cy="539.89" r="5.1"/><circle cx="512.9" cy="546.15" r="5.1"/><circle cx="512.9" cy="552.40" r="5.1"/><circle cx="512.9" cy="558.65" r="5.1"/><circle cx="512.9" cy="564.91" r="5.1"/><circle cx="512.9" cy="571.16" r="5.1"/><circle cx="512.9" cy="577.41" r="5.1"/><circle cx="512.9" cy="583.67" r="5.1"/><circle cx="512.9" cy="589.92" r="5.1"/><circle cx="512.9" cy="596.18" r="5.1"/><circle cx="512.9" cy="602.43" r="5.1"/><circle cx="512.9" cy="608.68" r="5.1"/><circle cx="512.9" cy="614.94" r="5.1"/><circle cx="512.9" cy="621.19" r="5.1"/><circle cx="512.9" cy="627.44" r="5.1"/><circle cx="512.9" cy="633.70" r="5.1"/><circle cx="512.9" cy="639.95" r="5.1"/><circle cx="512.9" cy="646.21" r="5.1"/><circle cx="512.9" cy="652.46" r="5.1"/><circle cx="512.9" cy="658.71" r="5.1"/><circle cx="512.9" cy="664.97" r="5.1"/><circle cx="512.9" cy="671.22" r="5.1"/><circle cx="512.9" cy="677.47" r="5.1"/><circle cx="512.9" cy="683.73" r="5.1"/><circle cx="512.9" cy="689.98" r="5.1"/><circle cx="512.9" cy="696.24" r="5.1"/><circle cx="512.9" cy="702.49" r="5.1"/><circle cx="512.9" cy="708.74" r="5.1"/><circle cx="512.9" cy="715.00" r="5.1"/><circle cx="512.9" cy="721.25" r="5.1"/><circle cx="512.9" cy="727.50" r="5.1"/><circle cx="512.9" cy="733.76" r="5.1"/><circle cx="512.9" cy="740.01" r="5.1"/><circle cx="512.9" cy="746.27" r="5.1"/><circle cx="512.9" cy="752.52" r="5.1"/><circle cx="512.9" cy="758.77" r="5.1"/><circle cx="512.9" cy="765.03" r="5.1"/><circle cx="512.9" cy="771.28" r="5.1"/><circle cx="512.9" cy="777.53" r="5.1"/><circle cx="512.9" cy="783.79" r="5.1"/><circle cx="512.9" cy="790.04" r="5.1"/><circle cx="512.9" cy="796.30" r="5.1"/><circle cx="512.9" cy="802.55" r="5.1"/><circle cx="512.9" cy="808.80" r="5.1"/><circle cx="512.9" cy="815.06" r="5.1"/><circle cx="512.9" cy="821.31" r="5.1"/><circle cx="512.9" cy="827.56" r="5.1"/><circle cx="512.9" cy="833.82" r="5.1"/><circle cx="512.9" cy="840.07" r="5.1"/><circle cx="512.9" cy="846.33" r="5.1"/><circle cx="512.9" cy="852.58" r="5.1"/><circle cx="512.9" cy="858.83" r="5.1"/><circle cx="512.9" cy="865.09" r="5.1"/><circle cx="512.9" cy="871.34" r="5.1"/><circle cx="512.9" cy="877.59" r="5.1"/><circle cx="512.9" cy="883.85" r="5.1"/><circle cx="512.9" cy="890.10" r="5.1"/><circle cx="512.9" cy="896.36" r="5.1"/><circle cx="512.9" cy="902.61" r="5.1"/><circle cx="512.9" cy="908.86" r="5.1"/><circle cx="512.9" cy="915.12" r="5.1"/><circle cx="512.9" cy="921.37" r="5.1"/><circle cx="512.9" cy="927.62" r="5.1"/><circle cx="512.9" cy="933.88" r="5.1"/><circle cx="512.9" cy="940.13" r="5.1"/><circle cx="512.9" cy="946.39" r="5.1"/><circle cx="512.9" cy="952.64" r="5.1"/><circle cx="512.9" cy="958.89" r="5.1"/><circle cx="512.9" cy="965.15" r="5.1"/><circle cx="512.9" cy="971.40" r="5.1"/><circle cx="512.9" cy="977.65" r="5.1"/><circle cx="512.9" cy="983.91" r="5.1"/><circle cx="512.9" cy="990.16" r="5.1"/><circle cx="512.9" cy="996.42" r="5.1"/><circle cx="512.9" cy="1002.67" r="5.1"/><circle cx="512.9" cy="1008.92" r="5.1"/><circle cx="512.9" cy="1015.18" r="5.1"/><circle cx="512.9" cy="1021.43" r="5.1"/><circle cx="512.9" cy="1027.68" r="5.1"/><circle cx="512.9" cy="1033.94" r="5.1"/><circle cx="512.9" cy="1040.19" r="5.1"/><circle cx="512.9" cy="1046.45" r="5.1"/><path d="M507.8 1052.7 A5.1 5.1 0 1 1 518.0 1052.7 C518.0 1055.7 513.9 1059.0 512.9 1061.0 C511.9 1059.0 507.8 1055.7 507.8 1052.7Z"/></g>
<rect x="531.1" y="1149.6" width="4.8" height="19.0" fill="#0000ff"/>
<g fill="#14ef62" stroke="#080808" stroke-width="1.3"><circle cx="533.5" cy="370.80" r="5.1"/><circle cx="533.5" cy="377.04" r="5.1"/><circle cx="533.5" cy="383.28" r="5.1"/><circle cx="533.5" cy="389.51" r="5.1"/><circle cx="533.5" cy="395.75" r="5.1"/><circle cx="533.5" cy="401.99" r="5.1"/><circle cx="533.5" cy="408.23" r="5.1"/><circle cx="533.5" cy="414.47" r="5.1"/><circle cx="533.5" cy="420.70" r="5.1"/><circle cx="533.5" cy="426.94" r="5.1"/><circle cx="533.5" cy="433.18" r="5.1"/><circle cx="533.5" cy="439.42" r="5.1"/><circle cx="533.5" cy="445.65" r="5.1"/><circle cx="533.5" cy="451.89" r="5.1"/><circle cx="533.5" cy="458.13" r="5.1"/><circle cx="533.5" cy="464.37" r="5.1"/><circle cx="533.5" cy="470.61" r="5.1"/><circle cx="533.5" cy="476.84" r="5.1"/><circle cx="533.5" cy="483.08" r="5.1"/><circle cx="533.5" cy="489.32" r="5.1"/><circle cx="533.5" cy="495.56" r="5.1"/><circle cx="533.5" cy="501.80" r="5.1"/><circle cx="533.5" cy="508.03" r="5.1"/><circle cx="533.5" cy="514.27" r="5.1"/><circle cx="533.5" cy="520.51" r="5.1"/><circle cx="533.5" cy="526.75" r="5.1"/><circle cx="533.5" cy="532.99" r="5.1"/><circle cx="533.5" cy="539.22" r="5.1"/><circle cx="533.5" cy="545.46" r="5.1"/><circle cx="533.5" cy="551.70" r="5.1"/><circle cx="533.5" cy="557.94" r="5.1"/><circle cx="533.5" cy="564.17" r="5.1"/><circle cx="533.5" cy="570.41" r="5.1"/><circle cx="533.5" cy="576.65" r="5.1"/><circle cx="533.5" cy="582.89" r="5.1"/><circle cx="533.5" cy="589.13" r="5.1"/><circle cx="533.5" cy="595.36" r="5.1"/><circle cx="533.5" cy="601.60" r="5.1"/><circle cx="533.5" cy="607.84" r="5.1"/><circle cx="533.5" cy="614.08" r="5.1"/><circle cx="533.5" cy="620.32" r="5.1"/><circle cx="533.5" cy="626.55" r="5.1"/><circle cx="533.5" cy="632.79" r="5.1"/><circle cx="533.5" cy="639.03" r="5.1"/><circle cx="533.5" cy="645.27" r="5.1"/><circle cx="533.5" cy="651.51" r="5.1"/><circle cx="533.5" cy="657.74" r="5.1"/><circle cx="533.5" cy="663.98" r="5.1"/><circle cx="533.5" cy="670.22" r="5.1"/><circle cx="533.5" cy="676.46" r="5.1"/><circle cx="533.5" cy="682.70" r="5.1"/><circle cx="533.5" cy="688.93" r="5.1"/><circle cx="533.5" cy="695.17" r="5.1"/><circle cx="533.5" cy="701.41" r="5.1"/><circle cx="533.5" cy="707.65" r="5.1"/><circle cx="533.5" cy="713.88" r="5.1"/><circle cx="533.5" cy="720.12" r="5.1"/><circle cx="533.5" cy="726.36" r="5.1"/><circle cx="533.5" cy="732.60" r="5.1"/><circle cx="533.5" cy="738.84" r="5.1"/><circle cx="533.5" cy="745.07" r="5.1"/><circle cx="533.5" cy="751.31" r="5.1"/><circle cx="533.5" cy="757.55" r="5.1"/><circle cx="533.5" cy="763.79" r="5.1"/><circle cx="533.5" cy="770.03" r="5.1"/><circle cx="533.5" cy="776.26" r="5.1"/><circle cx="533.5" cy="782.50" r="5.1"/><circle cx="533.5" cy="788.74" r="5.1"/><circle cx="533.5" cy="794.98" r="5.1"/><circle cx="533.5" cy="801.22" r="5.1"/><circle cx="533.5" cy="807.45" r="5.1"/><circle cx="533.5" cy="813.69" r="5.1"/><circle cx="533.5" cy="819.93" r="5.1"/><circle cx="533.5" cy="826.17" r="5.1"/><circle cx="533.5" cy="832.40" r="5.1"/><circle cx="533.5" cy="838.64" r="5.1"/><circle cx="533.5" cy="844.88" r="5.1"/><circle cx="533.5" cy="851.12" r="5.1"/><circle cx="533.5" cy="857.36" r="5.1"/><circle cx="533.5" cy="863.59" r="5.1"/><circle cx="533.5" cy="869.83" r="5.1"/><circle cx="533.5" cy="876.07" r="5.1"/><circle cx="533.5" cy="882.31" r="5.1"/><circle cx="533.5" cy="888.55" r="5.1"/><circle cx="533.5" cy="894.78" r="5.1"/><circle cx="533.5" cy="901.02" r="5.1"/><circle cx="533.5" cy="907.26" r="5.1"/><circle cx="533.5" cy="913.50" r="5.1"/><circle cx="533.5" cy="919.74" r="5.1"/><circle cx="533.5" cy="925.97" r="5.1"/><circle cx="533.5" cy="932.21" r="5.1"/><circle cx="533.5" cy="938.45" r="5.1"/><circle cx="533.5" cy="944.69" r="5.1"/><circle cx="533.5" cy="950.92" r="5.1"/><circle cx="533.5" cy="957.16" r="5.1"/><circle cx="533.5" cy="963.40" r="5.1"/><circle cx="533.5" cy="969.64" r="5.1"/><circle cx="533.5" cy="975.88" r="5.1"/><circle cx="533.5" cy="982.11" r="5.1"/><circle cx="533.5" cy="988.35" r="5.1"/><circle cx="533.5" cy="994.59" r="5.1"/><circle cx="533.5" cy="1000.83" r="5.1"/><circle cx="533.5" cy="1007.07" r="5.1"/><circle cx="533.5" cy="1013.30" r="5.1"/><circle cx="533.5" cy="1019.54" r="5.1"/><circle cx="533.5" cy="1025.78" r="5.1"/><circle cx="533.5" cy="1032.02" r="5.1"/><circle cx="533.5" cy="1038.26" r="5.1"/><circle cx="533.5" cy="1044.49" r="5.1"/><circle cx="533.5" cy="1050.73" r="5.1"/><circle cx="533.5" cy="1056.97" r="5.1"/><circle cx="533.5" cy="1063.21" r="5.1"/><circle cx="533.5" cy="1069.45" r="5.1"/><circle cx="533.5" cy="1075.68" r="5.1"/><circle cx="533.5" cy="1081.92" r="5.1"/><circle cx="533.5" cy="1088.16" r="5.1"/><circle cx="533.5" cy="1094.40" r="5.1"/><circle cx="533.5" cy="1100.63" r="5.1"/><circle cx="533.5" cy="1106.87" r="5.1"/><circle cx="533.5" cy="1113.11" r="5.1"/><circle cx="533.5" cy="1119.35" r="5.1"/><circle cx="533.5" cy="1125.59" r="5.1"/><circle cx="533.5" cy="1131.82" r="5.1"/><circle cx="533.5" cy="1138.06" r="5.1"/><path d="M528.4 1144.3 A5.1 5.1 0 1 1 538.6 1144.3 C538.6 1147.3 534.5 1150.6 533.5 1152.6 C532.5 1150.6 528.4 1147.3 528.4 1144.3Z"/></g>
<rect x="551.5" y="1149.6" width="4.8" height="19.0" fill="#ffa500"/>
<g fill="#14ef62" stroke="#080808" stroke-width="1.3"><circle cx="553.9" cy="370.80" r="5.1"/><circle cx="553.9" cy="377.04" r="5.1"/><circle cx="553.9" cy="383.28" r="5.1"/><circle cx="553.9" cy="389.51" r="5.1"/><circle cx="553.9" cy="395.75" r="5.1"/><circle cx="553.9" cy="401.99" r="5.1"/><circle cx="553.9" cy="408.23" r="5.1"/><circle cx="553.9" cy="414.47" r="5.1"/><circle cx="553.9" cy="420.70" r="5.1"/><circle cx="553.9" cy="426.94" r="5.1"/><circle cx="553.9" cy="433.18" r="5.1"/><circle cx="553.9" cy="439.42" r="5.1"/><circle cx="553.9" cy="445.65" r="5.1"/><circle cx="553.9" cy="451.89" r="5.1"/><circle cx="553.9" cy="458.13" r="5.1"/><circle cx="553.9" cy="464.37" r="5.1"/><circle cx="553.9" cy="470.61" r="5.1"/><circle cx="553.9" cy="476.84" r="5.1"/><circle cx="553.9" cy="483.08" r="5.1"/><circle cx="553.9" cy="489.32" r="5.1"/><circle cx="553.9" cy="495.56" r="5.1"/><circle cx="553.9" cy="501.80" r="5.1"/><circle cx="553.9" cy="508.03" r="5.1"/><circle cx="553.9" cy="514.27" r="5.1"/><circle cx="553.9" cy="520.51" r="5.1"/><circle cx="553.9" cy="526.75" r="5.1"/><circle cx="553.9" cy="532.99" r="5.1"/><circle cx="553.9" cy="539.22" r="5.1"/><circle cx="553.9" cy="545.46" r="5.1"/><circle cx="553.9" cy="551.70" r="5.1"/><circle cx="553.9" cy="557.94" r="5.1"/><circle cx="553.9" cy="564.17" r="5.1"/><circle cx="553.9" cy="570.41" r="5.1"/><circle cx="553.9" cy="576.65" r="5.1"/><circle cx="553.9" cy="582.89" r="5.1"/><circle cx="553.9" cy="589.13" r="5.1"/><circle cx="553.9" cy="595.36" r="5.1"/><circle cx="553.9" cy="601.60" r="5.1"/><circle cx="553.9" cy="607.84" r="5.1"/><circle cx="553.9" cy="614.08" r="5.1"/><circle cx="553.9" cy="620.32" r="5.1"/><circle cx="553.9" cy="626.55" r="5.1"/><circle cx="553.9" cy="632.79" r="5.1"/><circle cx="553.9" cy="639.03" r="5.1"/><circle cx="553.9" cy="645.27" r="5.1"/><circle cx="553.9" cy="651.51" r="5.1"/><circle cx="553.9" cy="657.74" r="5.1"/><circle cx="553.9" cy="663.98" r="5.1"/><circle cx="553.9" cy="670.22" r="5.1"/><circle cx="553.9" cy="676.46" r="5.1"/><circle cx="553.9" cy="682.70" r="5.1"/><circle cx="553.9" cy="688.93" r="5.1"/><circle cx="553.9" cy="695.17" r="5.1"/><circle cx="553.9" cy="701.41" r="5.1"/><circle cx="553.9" cy="707.65" r="5.1"/><circle cx="553.9" cy="713.88" r="5.1"/><circle cx="553.9" cy="720.12" r="5.1"/><circle cx="553.9" cy="726.36" r="5.1"/><circle cx="553.9" cy="732.60" r="5.1"/><circle cx="553.9" cy="738.84" r="5.1"/><circle cx="553.9" cy="745.07" r="5.1"/><circle cx="553.9" cy="751.31" r="5.1"/><circle cx="553.9" cy="757.55" r="5.1"/><circle cx="553.9" cy="763.79" r="5.1"/><circle cx="553.9" cy="770.03" r="5.1"/><circle cx="553.9" cy="776.26" r="5.1"/><circle cx="553.9" cy="782.50" r="5.1"/><circle cx="553.9" cy="788.74" r="5.1"/><circle cx="553.9" cy="794.98" r="5.1"/><circle cx="553.9" cy="801.22" r="5.1"/><circle cx="553.9" cy="807.45" r="5.1"/><circle cx="553.9" cy="813.69" r="5.1"/><circle cx="553.9" cy="819.93" r="5.1"/><circle cx="553.9" cy="826.17" r="5.1"/><circle cx="553.9" cy="832.40" r="5.1"/><circle cx="553.9" cy="838.64" r="5.1"/><circle cx="553.9" cy="844.88" r="5.1"/><circle cx="553.9" cy="851.12" r="5.1"/><circle cx="553.9" cy="857.36" r="5.1"/><circle cx="553.9" cy="863.59" r="5.1"/><circle cx="553.9" cy="869.83" r="5.1"/><circle cx="553.9" cy="876.07" r="5.1"/><circle cx="553.9" cy="882.31" r="5.1"/><circle cx="553.9" cy="888.55" r="5.1"/><circle cx="553.9" cy="894.78" r="5.1"/><circle cx="553.9" cy="901.02" r="5.1"/><circle cx="553.9" cy="907.26" r="5.1"/><circle cx="553.9" cy="913.50" r="5.1"/><circle cx="553.9" cy="919.74" r="5.1"/><circle cx="553.9" cy="925.97" r="5.1"/><circle cx="553.9" cy="932.21" r="5.1"/><circle cx="553.9" cy="938.45" r="5.1"/><circle cx="553.9" cy="944.69" r="5.1"/><circle cx="553.9" cy="950.92" r="5.1"/><circle cx="553.9" cy="957.16" r="5.1"/><circle cx="553.9" cy="963.40" r="5.1"/><circle cx="553.9" cy="969.64" r="5.1"/><circle cx="553.9" cy="975.88" r="5.1"/><circle cx="553.9" cy="982.11" r="5.1"/><circle cx="553.9" cy="988.35" r="5.1"/><circle cx="553.9" cy="994.59" r="5.1"/><circle cx="553.9" cy="1000.83" r="5.1"/><circle cx="553.9" cy="1007.07" r="5.1"/><circle cx="553.9" cy="1013.30" r="5.1"/><circle cx="553.9" cy="1019.54" r="5.1"/><circle cx="553.9" cy="1025.78" r="5.1"/><circle cx="553.9" cy="1032.02" r="5.1"/><circle cx="553.9" cy="1038.26" r="5.1"/><circle cx="553.9" cy="1044.49" r="5.1"/><circle cx="553.9" cy="1050.73" r="5.1"/><circle cx="553.9" cy="1056.97" r="5.1"/><circle cx="553.9" cy="1063.21" r="5.1"/><circle cx="553.9" cy="1069.45" r="5.1"/><circle cx="553.9" cy="1075.68" r="5.1"/><circle cx="553.9" cy="1081.92" r="5.1"/><circle cx="553.9" cy="1088.16" r="5.1"/><circle cx="553.9" cy="1094.40" r="5.1"/><circle cx="553.9" cy="1100.63" r="5.1"/><circle cx="553.9" cy="1106.87" r="5.1"/><circle cx="553.9" cy="1113.11" r="5.1"/><circle cx="553.9" cy="1119.35" r="5.1"/><circle cx="553.9" cy="1125.59" r="5.1"/><circle cx="553.9" cy="1131.82" r="5.1"/><circle cx="553.9" cy="1138.06" r="5.1"/><path d="M548.8 1144.3 A5.1 5.1 0 1 1 559.0 1144.3 C559.0 1147.3 554.9 1150.6 553.9 1152.6 C552.9 1150.6 548.8 1147.3 548.8 1144.3Z"/></g>
<rect x="572.3" y="1149.6" width="4.8" height="19.0" fill="#a000d8"/>
<g fill="#14ef62" stroke="#080808" stroke-width="1.3"><circle cx="574.7" cy="370.80" r="5.1"/><circle cx="574.7" cy="377.04" r="5.1"/><circle cx="574.7" cy="383.28" r="5.1"/><circle cx="574.7" cy="389.51" r="5.1"/><circle cx="574.7" cy="395.75" r="5.1"/><circle cx="574.7" cy="401.99" r="5.1"/><circle cx="574.7" cy="408.23" r="5.1"/><circle cx="574.7" cy="414.47" r="5.1"/><circle cx="574.7" cy="420.70" r="5.1"/><circle cx="574.7" cy="426.94" r="5.1"/><circle cx="574.7" cy="433.18" r="5.1"/><circle cx="574.7" cy="439.42" r="5.1"/><circle cx="574.7" cy="445.65" r="5.1"/><circle cx="574.7" cy="451.89" r="5.1"/><circle cx="574.7" cy="458.13" r="5.1"/><circle cx="574.7" cy="464.37" r="5.1"/><circle cx="574.7" cy="470.61" r="5.1"/><circle cx="574.7" cy="476.84" r="5.1"/><circle cx="574.7" cy="483.08" r="5.1"/><circle cx="574.7" cy="489.32" r="5.1"/><circle cx="574.7" cy="495.56" r="5.1"/><circle cx="574.7" cy="501.80" r="5.1"/><circle cx="574.7" cy="508.03" r="5.1"/><circle cx="574.7" cy="514.27" r="5.1"/><circle cx="574.7" cy="520.51" r="5.1"/><circle cx="574.7" cy="526.75" r="5.1"/><circle cx="574.7" cy="532.99" r="5.1"/><circle cx="574.7" cy="539.22" r="5.1"/><circle cx="574.7" cy="545.46" r="5.1"/><circle cx="574.7" cy="551.70" r="5.1"/><circle cx="574.7" cy="557.94" r="5.1"/><circle cx="574.7" cy="564.17" r="5.1"/><circle cx="574.7" cy="570.41" r="5.1"/><circle cx="574.7" cy="576.65" r="5.1"/><circle cx="574.7" cy="582.89" r="5.1"/><circle cx="574.7" cy="589.13" r="5.1"/><circle cx="574.7" cy="595.36" r="5.1"/><circle cx="574.7" cy="601.60" r="5.1"/><circle cx="574.7" cy="607.84" r="5.1"/><circle cx="574.7" cy="614.08" r="5.1"/><circle cx="574.7" cy="620.32" r="5.1"/><circle cx="574.7" cy="626.55" r="5.1"/><circle cx="574.7" cy="632.79" r="5.1"/><circle cx="574.7" cy="639.03" r="5.1"/><circle cx="574.7" cy="645.27" r="5.1"/><circle cx="574.7" cy="651.51" r="5.1"/><circle cx="574.7" cy="657.74" r="5.1"/><circle cx="574.7" cy="663.98" r="5.1"/><circle cx="574.7" cy="670.22" r="5.1"/><circle cx="574.7" cy="676.46" r="5.1"/><circle cx="574.7" cy="682.70" r="5.1"/><circle cx="574.7" cy="688.93" r="5.1"/><circle cx="574.7" cy="695.17" r="5.1"/><circle cx="574.7" cy="701.41" r="5.1"/><circle cx="574.7" cy="707.65" r="5.1"/><circle cx="574.7" cy="713.88" r="5.1"/><circle cx="574.7" cy="720.12" r="5.1"/><circle cx="574.7" cy="726.36" r="5.1"/><circle cx="574.7" cy="732.60" r="5.1"/><circle cx="574.7" cy="738.84" r="5.1"/><circle cx="574.7" cy="745.07" r="5.1"/><circle cx="574.7" cy="751.31" r="5.1"/><circle cx="574.7" cy="757.55" r="5.1"/><circle cx="574.7" cy="763.79" r="5.1"/><circle cx="574.7" cy="770.03" r="5.1"/><circle cx="574.7" cy="776.26" r="5.1"/><circle cx="574.7" cy="782.50" r="5.1"/><circle cx="574.7" cy="788.74" r="5.1"/><circle cx="574.7" cy="794.98" r="5.1"/><circle cx="574.7" cy="801.22" r="5.1"/><circle cx="574.7" cy="807.45" r="5.1"/><circle cx="574.7" cy="813.69" r="5.1"/><circle cx="574.7" cy="819.93" r="5.1"/><circle cx="574.7" cy="826.17" r="5.1"/><circle cx="574.7" cy="832.40" r="5.1"/><circle cx="574.7" cy="838.64" r="5.1"/><circle cx="574.7" cy="844.88" r="5.1"/><circle cx="574.7" cy="851.12" r="5.1"/><circle cx="574.7" cy="857.36" r="5.1"/><circle cx="574.7" cy="863.59" r="5.1"/><circle cx="574.7" cy="869.83" r="5.1"/><circle cx="574.7" cy="876.07" r="5.1"/><circle cx="574.7" cy="882.31" r="5.1"/><circle cx="574.7" cy="888.55" r="5.1"/><circle cx="574.7" cy="894.78" r="5.1"/><circle cx="574.7" cy="901.02" r="5.1"/><circle cx="574.7" cy="907.26" r="5.1"/><circle cx="574.7" cy="913.50" r="5.1"/><circle cx="574.7" cy="919.74" r="5.1"/><circle cx="574.7" cy="925.97" r="5.1"/><circle cx="574.7" cy="932.21" r="5.1"/><circle cx="574.7" cy="938.45" r="5.1"/><circle cx="574.7" cy="944.69" r="5.1"/><circle cx="574.7" cy="950.92" r="5.1"/><circle cx="574.7" cy="957.16" r="5.1"/><circle cx="574.7" cy="963.40" r="5.1"/><circle cx="574.7" cy="969.64" r="5.1"/><circle cx="574.7" cy="975.88" r="5.1"/><circle cx="574.7" cy="982.11" r="5.1"/><circle cx="574.7" cy="988.35" r="5.1"/><circle cx="574.7" cy="994.59" r="5.1"/><circle cx="574.7" cy="1000.83" r="5.1"/><circle cx="574.7" cy="1007.07" r="5.1"/><circle cx="574.7" cy="1013.30" r="5.1"/><circle cx="574.7" cy="1019.54" r="5.1"/><circle cx="574.7" cy="1025.78" r="5.1"/><circle cx="574.7" cy="1032.02" r="5.1"/><circle cx="574.7" cy="1038.26" r="5.1"/><circle cx="574.7" cy="1044.49" r="5.1"/><circle cx="574.7" cy="1050.73" r="5.1"/><circle cx="574.7" cy="1056.97" r="5.1"/><circle cx="574.7" cy="1063.21" r="5.1"/><circle cx="574.7" cy="1069.45" r="5.1"/><circle cx="574.7" cy="1075.68" r="5.1"/><circle cx="574.7" cy="1081.92" r="5.1"/><circle cx="574.7" cy="1088.16" r="5.1"/><circle cx="574.7" cy="1094.40" r="5.1"/><circle cx="574.7" cy="1100.63" r="5.1"/><circle cx="574.7" cy="1106.87" r="5.1"/><circle cx="574.7" cy="1113.11" r="5.1"/><circle cx="574.7" cy="1119.35" r="5.1"/><circle cx="574.7" cy="1125.59" r="5.1"/><circle cx="574.7" cy="1131.82" r="5.1"/><circle cx="574.7" cy="1138.06" r="5.1"/><path d="M569.6 1144.3 A5.1 5.1 0 1 1 579.8 1144.3 C579.8 1147.3 575.7 1150.6 574.7 1152.6 C573.7 1150.6 569.6 1147.3 569.6 1144.3Z"/></g>
<rect x="593.2" y="870.0" width="4.8" height="19.0" fill="#008080"/>
<g fill="#14ef62" stroke="#080808" stroke-width="1.3"><circle cx="595.6" cy="309.10" r="5.1"/><circle cx="595.6" cy="315.34" r="5.1"/><circle cx="595.6" cy="321.59" r="5.1"/><circle cx="595.6" cy="327.83" r="5.1"/><circle cx="595.6" cy="334.07" r="5.1"/><circle cx="595.6" cy="340.31" r="5.1"/><circle cx="595.6" cy="346.56" r="5.1"/><circle cx="595.6" cy="352.80" r="5.1"/><circle cx="595.6" cy="359.04" r="5.1"/><circle cx="595.6" cy="365.28" r="5.1"/><circle cx="595.6" cy="371.53" r="5.1"/><circle cx="595.6" cy="377.77" r="5.1"/><circle cx="595.6" cy="384.01" r="5.1"/><circle cx="595.6" cy="390.26" r="5.1"/><circle cx="595.6" cy="396.50" r="5.1"/><circle cx="595.6" cy="402.74" r="5.1"/><circle cx="595.6" cy="408.98" r="5.1"/><circle cx="595.6" cy="415.23" r="5.1"/><circle cx="595.6" cy="421.47" r="5.1"/><circle cx="595.6" cy="427.71" r="5.1"/><circle cx="595.6" cy="433.95" r="5.1"/><circle cx="595.6" cy="440.20" r="5.1"/><circle cx="595.6" cy="446.44" r="5.1"/><circle cx="595.6" cy="452.68" r="5.1"/><circle cx="595.6" cy="458.92" r="5.1"/><circle cx="595.6" cy="465.17" r="5.1"/><circle cx="595.6" cy="471.41" r="5.1"/><circle cx="595.6" cy="477.65" r="5.1"/><circle cx="595.6" cy="483.90" r="5.1"/><circle cx="595.6" cy="490.14" r="5.1"/><circle cx="595.6" cy="496.38" r="5.1"/><circle cx="595.6" cy="502.62" r="5.1"/><circle cx="595.6" cy="508.87" r="5.1"/><circle cx="595.6" cy="515.11" r="5.1"/><circle cx="595.6" cy="521.35" r="5.1"/><circle cx="595.6" cy="527.59" r="5.1"/><circle cx="595.6" cy="533.84" r="5.1"/><circle cx="595.6" cy="540.08" r="5.1"/><circle cx="595.6" cy="546.32" r="5.1"/><circle cx="595.6" cy="552.57" r="5.1"/><circle cx="595.6" cy="558.81" r="5.1"/><circle cx="595.6" cy="565.05" r="5.1"/><circle cx="595.6" cy="571.29" r="5.1"/><circle cx="595.6" cy="577.54" r="5.1"/><circle cx="595.6" cy="583.78" r="5.1"/><circle cx="595.6" cy="590.02" r="5.1"/><circle cx="595.6" cy="596.26" r="5.1"/><circle cx="595.6" cy="602.51" r="5.1"/><circle cx="595.6" cy="608.75" r="5.1"/><circle cx="595.6" cy="614.99" r="5.1"/><circle cx="595.6" cy="621.23" r="5.1"/><circle cx="595.6" cy="627.48" r="5.1"/><circle cx="595.6" cy="633.72" r="5.1"/><circle cx="595.6" cy="639.96" r="5.1"/><circle cx="595.6" cy="646.21" r="5.1"/><circle cx="595.6" cy="652.45" r="5.1"/><circle cx="595.6" cy="658.69" r="5.1"/><circle cx="595.6" cy="664.93" r="5.1"/><circle cx="595.6" cy="671.18" r="5.1"/><circle cx="595.6" cy="677.42" r="5.1"/><circle cx="595.6" cy="683.66" r="5.1"/><circle cx="595.6" cy="689.90" r="5.1"/><circle cx="595.6" cy="696.15" r="5.1"/><circle cx="595.6" cy="702.39" r="5.1"/><circle cx="595.6" cy="708.63" r="5.1"/><circle cx="595.6" cy="714.88" r="5.1"/><circle cx="595.6" cy="721.12" r="5.1"/><circle cx="595.6" cy="727.36" r="5.1"/><circle cx="595.6" cy="733.60" r="5.1"/><circle cx="595.6" cy="739.85" r="5.1"/><circle cx="595.6" cy="746.09" r="5.1"/><circle cx="595.6" cy="752.33" r="5.1"/><circle cx="595.6" cy="758.57" r="5.1"/><circle cx="595.6" cy="764.82" r="5.1"/><circle cx="595.6" cy="771.06" r="5.1"/><circle cx="595.6" cy="777.30" r="5.1"/><circle cx="595.6" cy="783.54" r="5.1"/><circle cx="595.6" cy="789.79" r="5.1"/><circle cx="595.6" cy="796.03" r="5.1"/><circle cx="595.6" cy="802.27" r="5.1"/><circle cx="595.6" cy="808.52" r="5.1"/><circle cx="595.6" cy="814.76" r="5.1"/><circle cx="595.6" cy="821.00" r="5.1"/><circle cx="595.6" cy="827.24" r="5.1"/><circle cx="595.6" cy="833.49" r="5.1"/><circle cx="595.6" cy="839.73" r="5.1"/><circle cx="595.6" cy="845.97" r="5.1"/><circle cx="595.6" cy="852.21" r="5.1"/><circle cx="595.6" cy="858.46" r="5.1"/><path d="M590.5 864.7 A5.1 5.1 0 1 1 600.7 864.7 C600.7 867.7 596.6 871.0 595.6 873.0 C594.6 871.0 590.5 867.7 590.5 864.7Z"/></g>
<rect x="614.2" y="839.0" width="4.8" height="19.0" fill="#ff0000"/>
<g fill="#14ef62" stroke="#080808" stroke-width="1.3"><circle cx="616.6" cy="309.10" r="5.1"/><circle cx="616.6" cy="315.35" r="5.1"/><circle cx="616.6" cy="321.59" r="5.1"/><circle cx="616.6" cy="327.84" r="5.1"/><circle cx="616.6" cy="334.08" r="5.1"/><circle cx="616.6" cy="340.33" r="5.1"/><circle cx="616.6" cy="346.57" r="5.1"/><circle cx="616.6" cy="352.82" r="5.1"/><circle cx="616.6" cy="359.06" r="5.1"/><circle cx="616.6" cy="365.31" r="5.1"/><circle cx="616.6" cy="371.55" r="5.1"/><circle cx="616.6" cy="377.80" r="5.1"/><circle cx="616.6" cy="384.04" r="5.1"/><circle cx="616.6" cy="390.29" r="5.1"/><circle cx="616.6" cy="396.53" r="5.1"/><circle cx="616.6" cy="402.78" r="5.1"/><circle cx="616.6" cy="409.02" r="5.1"/><circle cx="616.6" cy="415.27" r="5.1"/><circle cx="616.6" cy="421.51" r="5.1"/><circle cx="616.6" cy="427.76" r="5.1"/><circle cx="616.6" cy="434.00" r="5.1"/><circle cx="616.6" cy="440.25" r="5.1"/><circle cx="616.6" cy="446.50" r="5.1"/><circle cx="616.6" cy="452.74" r="5.1"/><circle cx="616.6" cy="458.99" r="5.1"/><circle cx="616.6" cy="465.23" r="5.1"/><circle cx="616.6" cy="471.48" r="5.1"/><circle cx="616.6" cy="477.72" r="5.1"/><circle cx="616.6" cy="483.97" r="5.1"/><circle cx="616.6" cy="490.21" r="5.1"/><circle cx="616.6" cy="496.46" r="5.1"/><circle cx="616.6" cy="502.70" r="5.1"/><circle cx="616.6" cy="508.95" r="5.1"/><circle cx="616.6" cy="515.19" r="5.1"/><circle cx="616.6" cy="521.44" r="5.1"/><circle cx="616.6" cy="527.68" r="5.1"/><circle cx="616.6" cy="533.93" r="5.1"/><circle cx="616.6" cy="540.17" r="5.1"/><circle cx="616.6" cy="546.42" r="5.1"/><circle cx="616.6" cy="552.66" r="5.1"/><circle cx="616.6" cy="558.91" r="5.1"/><circle cx="616.6" cy="565.15" r="5.1"/><circle cx="616.6" cy="571.40" r="5.1"/><circle cx="616.6" cy="577.65" r="5.1"/><circle cx="616.6" cy="583.89" r="5.1"/><circle cx="616.6" cy="590.14" r="5.1"/><circle cx="616.6" cy="596.38" r="5.1"/><circle cx="616.6" cy="602.63" r="5.1"/><circle cx="616.6" cy="608.87" r="5.1"/><circle cx="616.6" cy="615.12" r="5.1"/><circle cx="616.6" cy="621.36" r="5.1"/><circle cx="616.6" cy="627.61" r="5.1"/><circle cx="616.6" cy="633.85" r="5.1"/><circle cx="616.6" cy="640.10" r="5.1"/><circle cx="616.6" cy="646.34" r="5.1"/><circle cx="616.6" cy="652.59" r="5.1"/><circle cx="616.6" cy="658.83" r="5.1"/><circle cx="616.6" cy="665.08" r="5.1"/><circle cx="616.6" cy="671.32" r="5.1"/><circle cx="616.6" cy="677.57" r="5.1"/><circle cx="616.6" cy="683.81" r="5.1"/><circle cx="616.6" cy="690.06" r="5.1"/><circle cx="616.6" cy="696.30" r="5.1"/><circle cx="616.6" cy="702.55" r="5.1"/><circle cx="616.6" cy="708.80" r="5.1"/><circle cx="616.6" cy="715.04" r="5.1"/><circle cx="616.6" cy="721.29" r="5.1"/><circle cx="616.6" cy="727.53" r="5.1"/><circle cx="616.6" cy="733.78" r="5.1"/><circle cx="616.6" cy="740.02" r="5.1"/><circle cx="616.6" cy="746.27" r="5.1"/><circle cx="616.6" cy="752.51" r="5.1"/><circle cx="616.6" cy="758.76" r="5.1"/><circle cx="616.6" cy="765.00" r="5.1"/><circle cx="616.6" cy="771.25" r="5.1"/><circle cx="616.6" cy="777.49" r="5.1"/><circle cx="616.6" cy="783.74" r="5.1"/><circle cx="616.6" cy="789.98" r="5.1"/><circle cx="616.6" cy="796.23" r="5.1"/><circle cx="616.6" cy="802.47" r="5.1"/><circle cx="616.6" cy="808.72" r="5.1"/><circle cx="616.6" cy="814.96" r="5.1"/><circle cx="616.6" cy="821.21" r="5.1"/><circle cx="616.6" cy="827.45" r="5.1"/><path d="M611.5 833.7 A5.1 5.1 0 1 1 621.7 833.7 C621.7 836.7 617.6 840.0 616.6 842.0 C615.6 840.0 611.5 836.7 611.5 833.7Z"/></g>
<rect x="634.9" y="810.0" width="4.8" height="19.0" fill="#008000"/>
<g fill="#14ef62" stroke="#080808" stroke-width="1.3"><circle cx="637.3" cy="316.10" r="5.1"/><circle cx="637.3" cy="322.36" r="5.1"/><circle cx="637.3" cy="328.63" r="5.1"/><circle cx="637.3" cy="334.89" r="5.1"/><circle cx="637.3" cy="341.16" r="5.1"/><circle cx="637.3" cy="347.42" r="5.1"/><circle cx="637.3" cy="353.68" r="5.1"/><circle cx="637.3" cy="359.95" r="5.1"/><circle cx="637.3" cy="366.21" r="5.1"/><circle cx="637.3" cy="372.48" r="5.1"/><circle cx="637.3" cy="378.74" r="5.1"/><circle cx="637.3" cy="385.01" r="5.1"/><circle cx="637.3" cy="391.27" r="5.1"/><circle cx="637.3" cy="397.53" r="5.1"/><circle cx="637.3" cy="403.80" r="5.1"/><circle cx="637.3" cy="410.06" r="5.1"/><circle cx="637.3" cy="416.33" r="5.1"/><circle cx="637.3" cy="422.59" r="5.1"/><circle cx="637.3" cy="428.85" r="5.1"/><circle cx="637.3" cy="435.12" r="5.1"/><circle cx="637.3" cy="441.38" r="5.1"/><circle cx="637.3" cy="447.65" r="5.1"/><circle cx="637.3" cy="453.91" r="5.1"/><circle cx="637.3" cy="460.17" r="5.1"/><circle cx="637.3" cy="466.44" r="5.1"/><circle cx="637.3" cy="472.70" r="5.1"/><circle cx="637.3" cy="478.97" r="5.1"/><circle cx="637.3" cy="485.23" r="5.1"/><circle cx="637.3" cy="491.49" r="5.1"/><circle cx="637.3" cy="497.76" r="5.1"/><circle cx="637.3" cy="504.02" r="5.1"/><circle cx="637.3" cy="510.29" r="5.1"/><circle cx="637.3" cy="516.55" r="5.1"/><circle cx="637.3" cy="522.82" r="5.1"/><circle cx="637.3" cy="529.08" r="5.1"/><circle cx="637.3" cy="535.34" r="5.1"/><circle cx="637.3" cy="541.61" r="5.1"/><circle cx="637.3" cy="547.87" r="5.1"/><circle cx="637.3" cy="554.14" r="5.1"/><circle cx="637.3" cy="560.40" r="5.1"/><circle cx="637.3" cy="566.66" r="5.1"/><circle cx="637.3" cy="572.93" r="5.1"/><circle cx="637.3" cy="579.19" r="5.1"/><circle cx="637.3" cy="585.46" r="5.1"/><circle cx="637.3" cy="591.72" r="5.1"/><circle cx="637.3" cy="597.98" r="5.1"/><circle cx="637.3" cy="604.25" r="5.1"/><circle cx="637.3" cy="610.51" r="5.1"/><circle cx="637.3" cy="616.78" r="5.1"/><circle cx="637.3" cy="623.04" r="5.1"/><circle cx="637.3" cy="629.31" r="5.1"/><circle cx="637.3" cy="635.57" r="5.1"/><circle cx="637.3" cy="641.83" r="5.1"/><circle cx="637.3" cy="648.10" r="5.1"/><circle cx="637.3" cy="654.36" r="5.1"/><circle cx="637.3" cy="660.63" r="5.1"/><circle cx="637.3" cy="666.89" r="5.1"/><circle cx="637.3" cy="673.15" r="5.1"/><circle cx="637.3" cy="679.42" r="5.1"/><circle cx="637.3" cy="685.68" r="5.1"/><circle cx="637.3" cy="691.95" r="5.1"/><circle cx="637.3" cy="698.21" r="5.1"/><circle cx="637.3" cy="704.47" r="5.1"/><circle cx="637.3" cy="710.74" r="5.1"/><circle cx="637.3" cy="717.00" r="5.1"/><circle cx="637.3" cy="723.27" r="5.1"/><circle cx="637.3" cy="729.53" r="5.1"/><circle cx="637.3" cy="735.79" r="5.1"/><circle cx="637.3" cy="742.06" r="5.1"/><circle cx="637.3" cy="748.32" r="5.1"/><circle cx="637.3" cy="754.59" r="5.1"/><circle cx="637.3" cy="760.85" r="5.1"/><circle cx="637.3" cy="767.12" r="5.1"/><circle cx="637.3" cy="773.38" r="5.1"/><circle cx="637.3" cy="779.64" r="5.1"/><circle cx="637.3" cy="785.91" r="5.1"/><circle cx="637.3" cy="792.17" r="5.1"/><circle cx="637.3" cy="798.44" r="5.1"/><path d="M632.2 804.7 A5.1 5.1 0 1 1 642.4 804.7 C642.4 807.7 638.3 811.0 637.3 813.0 C636.3 811.0 632.2 807.7 632.2 804.7Z"/></g>
<rect x="655.6" y="766.0" width="4.8" height="19.0" fill="#0000ff"/>
<g fill="#14ef62" stroke="#080808" stroke-width="1.3"><circle cx="658.0" cy="293.10" r="5.1"/><circle cx="658.0" cy="299.33" r="5.1"/><circle cx="658.0" cy="305.57" r="5.1"/><circle cx="658.0" cy="311.80" r="5.1"/><circle cx="658.0" cy="318.04" r="5.1"/><circle cx="658.0" cy="324.27" r="5.1"/><circle cx="658.0" cy="330.51" r="5.1"/><circle cx="658.0" cy="336.74" r="5.1"/><circle cx="658.0" cy="342.98" r="5.1"/><circle cx="658.0" cy="349.21" r="5.1"/><circle cx="658.0" cy="355.45" r="5.1"/><circle cx="658.0" cy="361.68" r="5.1"/><circle cx="658.0" cy="367.92" r="5.1"/><circle cx="658.0" cy="374.15" r="5.1"/><circle cx="658.0" cy="380.39" r="5.1"/><circle cx="658.0" cy="386.62" r="5.1"/><circle cx="658.0" cy="392.85" r="5.1"/><circle cx="658.0" cy="399.09" r="5.1"/><circle cx="658.0" cy="405.32" r="5.1"/><circle cx="658.0" cy="411.56" r="5.1"/><circle cx="658.0" cy="417.79" r="5.1"/><circle cx="658.0" cy="424.03" r="5.1"/><circle cx="658.0" cy="430.26" r="5.1"/><circle cx="658.0" cy="436.50" r="5.1"/><circle cx="658.0" cy="442.73" r="5.1"/><circle cx="658.0" cy="448.97" r="5.1"/><circle cx="658.0" cy="455.20" r="5.1"/><circle cx="658.0" cy="461.44" r="5.1"/><circle cx="658.0" cy="467.67" r="5.1"/><circle cx="658.0" cy="473.91" r="5.1"/><circle cx="658.0" cy="480.14" r="5.1"/><circle cx="658.0" cy="486.37" r="5.1"/><circle cx="658.0" cy="492.61" r="5.1"/><circle cx="658.0" cy="498.84" r="5.1"/><circle cx="658.0" cy="505.08" r="5.1"/><circle cx="658.0" cy="511.31" r="5.1"/><circle cx="658.0" cy="517.55" r="5.1"/><circle cx="658.0" cy="523.78" r="5.1"/><circle cx="658.0" cy="530.02" r="5.1"/><circle cx="658.0" cy="536.25" r="5.1"/><circle cx="658.0" cy="542.49" r="5.1"/><circle cx="658.0" cy="548.72" r="5.1"/><circle cx="658.0" cy="554.96" r="5.1"/><circle cx="658.0" cy="561.19" r="5.1"/><circle cx="658.0" cy="567.43" r="5.1"/><circle cx="658.0" cy="573.66" r="5.1"/><circle cx="658.0" cy="579.89" r="5.1"/><circle cx="658.0" cy="586.13" r="5.1"/><circle cx="658.0" cy="592.36" r="5.1"/><circle cx="658.0" cy="598.60" r="5.1"/><circle cx="658.0" cy="604.83" r="5.1"/><circle cx="658.0" cy="611.07" r="5.1"/><circle cx="658.0" cy="617.30" r="5.1"/><circle cx="658.0" cy="623.54" r="5.1"/><circle cx="658.0" cy="629.77" r="5.1"/><circle cx="658.0" cy="636.01" r="5.1"/><circle cx="658.0" cy="642.24" r="5.1"/><circle cx="658.0" cy="648.48" r="5.1"/><circle cx="658.0" cy="654.71" r="5.1"/><circle cx="658.0" cy="660.95" r="5.1"/><circle cx="658.0" cy="667.18" r="5.1"/><circle cx="658.0" cy="673.41" r="5.1"/><circle cx="658.0" cy="679.65" r="5.1"/><circle cx="658.0" cy="685.88" r="5.1"/><circle cx="658.0" cy="692.12" r="5.1"/><circle cx="658.0" cy="698.35" r="5.1"/><circle cx="658.0" cy="704.59" r="5.1"/><circle cx="658.0" cy="710.82" r="5.1"/><circle cx="658.0" cy="717.06" r="5.1"/><circle cx="658.0" cy="723.29" r="5.1"/><circle cx="658.0" cy="729.53" r="5.1"/><circle cx="658.0" cy="735.76" r="5.1"/><circle cx="658.0" cy="742.00" r="5.1"/><circle cx="658.0" cy="748.23" r="5.1"/><circle cx="658.0" cy="754.47" r="5.1"/><path d="M652.9 760.7 A5.1 5.1 0 1 1 663.1 760.7 C663.1 763.7 659.0 767.0 658.0 769.0 C657.0 767.0 652.9 763.7 652.9 760.7Z"/></g>
<rect x="676.2" y="715.0" width="4.8" height="19.0" fill="#ffa500"/>
<g fill="#14ef62" stroke="#080808" stroke-width="1.3"><circle cx="678.6" cy="272.60" r="5.1"/><circle cx="678.6" cy="278.84" r="5.1"/><circle cx="678.6" cy="285.09" r="5.1"/><circle cx="678.6" cy="291.33" r="5.1"/><circle cx="678.6" cy="297.58" r="5.1"/><circle cx="678.6" cy="303.82" r="5.1"/><circle cx="678.6" cy="310.07" r="5.1"/><circle cx="678.6" cy="316.31" r="5.1"/><circle cx="678.6" cy="322.55" r="5.1"/><circle cx="678.6" cy="328.80" r="5.1"/><circle cx="678.6" cy="335.04" r="5.1"/><circle cx="678.6" cy="341.29" r="5.1"/><circle cx="678.6" cy="347.53" r="5.1"/><circle cx="678.6" cy="353.78" r="5.1"/><circle cx="678.6" cy="360.02" r="5.1"/><circle cx="678.6" cy="366.26" r="5.1"/><circle cx="678.6" cy="372.51" r="5.1"/><circle cx="678.6" cy="378.75" r="5.1"/><circle cx="678.6" cy="385.00" r="5.1"/><circle cx="678.6" cy="391.24" r="5.1"/><circle cx="678.6" cy="397.49" r="5.1"/><circle cx="678.6" cy="403.73" r="5.1"/><circle cx="678.6" cy="409.97" r="5.1"/><circle cx="678.6" cy="416.22" r="5.1"/><circle cx="678.6" cy="422.46" r="5.1"/><circle cx="678.6" cy="428.71" r="5.1"/><circle cx="678.6" cy="434.95" r="5.1"/><circle cx="678.6" cy="441.20" r="5.1"/><circle cx="678.6" cy="447.44" r="5.1"/><circle cx="678.6" cy="453.68" r="5.1"/><circle cx="678.6" cy="459.93" r="5.1"/><circle cx="678.6" cy="466.17" r="5.1"/><circle cx="678.6" cy="472.42" r="5.1"/><circle cx="678.6" cy="478.66" r="5.1"/><circle cx="678.6" cy="484.91" r="5.1"/><circle cx="678.6" cy="491.15" r="5.1"/><circle cx="678.6" cy="497.39" r="5.1"/><circle cx="678.6" cy="503.64" r="5.1"/><circle cx="678.6" cy="509.88" r="5.1"/><circle cx="678.6" cy="516.13" r="5.1"/><circle cx="678.6" cy="522.37" r="5.1"/><circle cx="678.6" cy="528.62" r="5.1"/><circle cx="678.6" cy="534.86" r="5.1"/><circle cx="678.6" cy="541.10" r="5.1"/><circle cx="678.6" cy="547.35" r="5.1"/><circle cx="678.6" cy="553.59" r="5.1"/><circle cx="678.6" cy="559.84" r="5.1"/><circle cx="678.6" cy="566.08" r="5.1"/><circle cx="678.6" cy="572.33" r="5.1"/><circle cx="678.6" cy="578.57" r="5.1"/><circle cx="678.6" cy="584.81" r="5.1"/><circle cx="678.6" cy="591.06" r="5.1"/><circle cx="678.6" cy="597.30" r="5.1"/><circle cx="678.6" cy="603.55" r="5.1"/><circle cx="678.6" cy="609.79" r="5.1"/><circle cx="678.6" cy="616.04" r="5.1"/><circle cx="678.6" cy="622.28" r="5.1"/><circle cx="678.6" cy="628.52" r="5.1"/><circle cx="678.6" cy="634.77" r="5.1"/><circle cx="678.6" cy="641.01" r="5.1"/><circle cx="678.6" cy="647.26" r="5.1"/><circle cx="678.6" cy="653.50" r="5.1"/><circle cx="678.6" cy="659.75" r="5.1"/><circle cx="678.6" cy="665.99" r="5.1"/><circle cx="678.6" cy="672.23" r="5.1"/><circle cx="678.6" cy="678.48" r="5.1"/><circle cx="678.6" cy="684.72" r="5.1"/><circle cx="678.6" cy="690.97" r="5.1"/><circle cx="678.6" cy="697.21" r="5.1"/><circle cx="678.6" cy="703.46" r="5.1"/><path d="M673.5 709.7 A5.1 5.1 0 1 1 683.7 709.7 C683.7 712.7 679.6 716.0 678.6 718.0 C677.6 716.0 673.5 712.7 673.5 709.7Z"/></g>
<rect x="697.0" y="580.0" width="4.8" height="19.0" fill="#a000d8"/>
<g fill="#14ef62" stroke="#080808" stroke-width="1.3"><circle cx="699.4" cy="234.10" r="5.1"/><circle cx="699.4" cy="240.41" r="5.1"/><circle cx="699.4" cy="246.71" r="5.1"/><circle cx="699.4" cy="253.02" r="5.1"/><circle cx="699.4" cy="259.33" r="5.1"/><circle cx="699.4" cy="265.64" r="5.1"/><circle cx="699.4" cy="271.94" r="5.1"/><circle cx="699.4" cy="278.25" r="5.1"/><circle cx="699.4" cy="284.56" r="5.1"/><circle cx="699.4" cy="290.87" r="5.1"/><circle cx="699.4" cy="297.17" r="5.1"/><circle cx="699.4" cy="303.48" r="5.1"/><circle cx="699.4" cy="309.79" r="5.1"/><circle cx="699.4" cy="316.10" r="5.1"/><circle cx="699.4" cy="322.40" r="5.1"/><circle cx="699.4" cy="328.71" r="5.1"/><circle cx="699.4" cy="335.02" r="5.1"/><circle cx="699.4" cy="341.33" r="5.1"/><circle cx="699.4" cy="347.63" r="5.1"/><circle cx="699.4" cy="353.94" r="5.1"/><circle cx="699.4" cy="360.25" r="5.1"/><circle cx="699.4" cy="366.56" r="5.1"/><circle cx="699.4" cy="372.86" r="5.1"/><circle cx="699.4" cy="379.17" r="5.1"/><circle cx="699.4" cy="385.48" r="5.1"/><circle cx="699.4" cy="391.79" r="5.1"/><circle cx="699.4" cy="398.09" r="5.1"/><circle cx="699.4" cy="404.40" r="5.1"/><circle cx="699.4" cy="410.71" r="5.1"/><circle cx="699.4" cy="417.01" r="5.1"/><circle cx="699.4" cy="423.32" r="5.1"/><circle cx="699.4" cy="429.63" r="5.1"/><circle cx="699.4" cy="435.94" r="5.1"/><circle cx="699.4" cy="442.24" r="5.1"/><circle cx="699.4" cy="448.55" r="5.1"/><circle cx="699.4" cy="454.86" r="5.1"/><circle cx="699.4" cy="461.17" r="5.1"/><circle cx="699.4" cy="467.47" r="5.1"/><circle cx="699.4" cy="473.78" r="5.1"/><circle cx="699.4" cy="480.09" r="5.1"/><circle cx="699.4" cy="486.40" r="5.1"/><circle cx="699.4" cy="492.70" r="5.1"/><circle cx="699.4" cy="499.01" r="5.1"/><circle cx="699.4" cy="505.32" r="5.1"/><circle cx="699.4" cy="511.63" r="5.1"/><circle cx="699.4" cy="517.93" r="5.1"/><circle cx="699.4" cy="524.24" r="5.1"/><circle cx="699.4" cy="530.55" r="5.1"/><circle cx="699.4" cy="536.86" r="5.1"/><circle cx="699.4" cy="543.16" r="5.1"/><circle cx="699.4" cy="549.47" r="5.1"/><circle cx="699.4" cy="555.78" r="5.1"/><circle cx="699.4" cy="562.09" r="5.1"/><circle cx="699.4" cy="568.39" r="5.1"/><path d="M694.3 574.7 A5.1 5.1 0 1 1 704.5 574.7 C704.5 577.7 700.4 581.0 699.4 583.0 C698.4 581.0 694.3 577.7 694.3 574.7Z"/></g>
<rect x="718.0" y="530.0" width="4.8" height="19.0" fill="#008080"/>
<g fill="#14ef62" stroke="#080808" stroke-width="1.3"><circle cx="720.4" cy="141.10" r="5.1"/><circle cx="720.4" cy="147.39" r="5.1"/><circle cx="720.4" cy="153.68" r="5.1"/><circle cx="720.4" cy="159.97" r="5.1"/><circle cx="720.4" cy="166.25" r="5.1"/><circle cx="720.4" cy="172.54" r="5.1"/><circle cx="720.4" cy="178.83" r="5.1"/><circle cx="720.4" cy="185.12" r="5.1"/><circle cx="720.4" cy="191.41" r="5.1"/><circle cx="720.4" cy="197.70" r="5.1"/><circle cx="720.4" cy="203.99" r="5.1"/><circle cx="720.4" cy="210.27" r="5.1"/><circle cx="720.4" cy="216.56" r="5.1"/><circle cx="720.4" cy="222.85" r="5.1"/><circle cx="720.4" cy="229.14" r="5.1"/><circle cx="720.4" cy="235.43" r="5.1"/><circle cx="720.4" cy="241.72" r="5.1"/><circle cx="720.4" cy="248.00" r="5.1"/><circle cx="720.4" cy="254.29" r="5.1"/><circle cx="720.4" cy="260.58" r="5.1"/><circle cx="720.4" cy="266.87" r="5.1"/><circle cx="720.4" cy="273.16" r="5.1"/><circle cx="720.4" cy="279.45" r="5.1"/><circle cx="720.4" cy="285.74" r="5.1"/><circle cx="720.4" cy="292.02" r="5.1"/><circle cx="720.4" cy="298.31" r="5.1"/><circle cx="720.4" cy="304.60" r="5.1"/><circle cx="720.4" cy="310.89" r="5.1"/><circle cx="720.4" cy="317.18" r="5.1"/><circle cx="720.4" cy="323.47" r="5.1"/><circle cx="720.4" cy="329.76" r="5.1"/><circle cx="720.4" cy="336.04" r="5.1"/><circle cx="720.4" cy="342.33" r="5.1"/><circle cx="720.4" cy="348.62" r="5.1"/><circle cx="720.4" cy="354.91" r="5.1"/><circle cx="720.4" cy="361.20" r="5.1"/><circle cx="720.4" cy="367.49" r="5.1"/><circle cx="720.4" cy="373.78" r="5.1"/><circle cx="720.4" cy="380.06" r="5.1"/><circle cx="720.4" cy="386.35" r="5.1"/><circle cx="720.4" cy="392.64" r="5.1"/><circle cx="720.4" cy="398.93" r="5.1"/><circle cx="720.4" cy="405.22" r="5.1"/><circle cx="720.4" cy="411.51" r="5.1"/><circle cx="720.4" cy="417.80" r="5.1"/><circle cx="720.4" cy="424.08" r="5.1"/><circle cx="720.4" cy="430.37" r="5.1"/><circle cx="720.4" cy="436.66" r="5.1"/><circle cx="720.4" cy="442.95" r="5.1"/><circle cx="720.4" cy="449.24" r="5.1"/><circle cx="720.4" cy="455.53" r="5.1"/><circle cx="720.4" cy="461.81" r="5.1"/><circle cx="720.4" cy="468.10" r="5.1"/><circle cx="720.4" cy="474.39" r="5.1"/><circle cx="720.4" cy="480.68" r="5.1"/><circle cx="720.4" cy="486.97" r="5.1"/><circle cx="720.4" cy="493.26" r="5.1"/><circle cx="720.4" cy="499.55" r="5.1"/><circle cx="720.4" cy="505.83" r="5.1"/><circle cx="720.4" cy="512.12" r="5.1"/><circle cx="720.4" cy="518.41" r="5.1"/><path d="M715.3 524.7 A5.1 5.1 0 1 1 725.5 524.7 C725.5 527.7 721.4 531.0 720.4 533.0 C719.4 531.0 715.3 527.7 715.3 524.7Z"/></g>
<rect x="738.8" y="517.3" width="4.8" height="19.0" fill="#ff0000"/>
<g fill="#14ef62" stroke="#080808" stroke-width="1.3"><circle cx="741.2" cy="109.10" r="5.1"/><circle cx="741.2" cy="115.40" r="5.1"/><circle cx="741.2" cy="121.69" r="5.1"/><circle cx="741.2" cy="127.99" r="5.1"/><circle cx="741.2" cy="134.28" r="5.1"/><circle cx="741.2" cy="140.58" r="5.1"/><circle cx="741.2" cy="146.87" r="5.1"/><circle cx="741.2" cy="153.17" r="5.1"/><circle cx="741.2" cy="159.46" r="5.1"/><circle cx="741.2" cy="165.76" r="5.1"/><circle cx="741.2" cy="172.05" r="5.1"/><circle cx="741.2" cy="178.35" r="5.1"/><circle cx="741.2" cy="184.64" r="5.1"/><circle cx="741.2" cy="190.94" r="5.1"/><circle cx="741.2" cy="197.23" r="5.1"/><circle cx="741.2" cy="203.53" r="5.1"/><circle cx="741.2" cy="209.82" r="5.1"/><circle cx="741.2" cy="216.12" r="5.1"/><circle cx="741.2" cy="222.42" r="5.1"/><circle cx="741.2" cy="228.71" r="5.1"/><circle cx="741.2" cy="235.01" r="5.1"/><circle cx="741.2" cy="241.30" r="5.1"/><circle cx="741.2" cy="247.60" r="5.1"/><circle cx="741.2" cy="253.89" r="5.1"/><circle cx="741.2" cy="260.19" r="5.1"/><circle cx="741.2" cy="266.48" r="5.1"/><circle cx="741.2" cy="272.78" r="5.1"/><circle cx="741.2" cy="279.07" r="5.1"/><circle cx="741.2" cy="285.37" r="5.1"/><circle cx="741.2" cy="291.66" r="5.1"/><circle cx="741.2" cy="297.96" r="5.1"/><circle cx="741.2" cy="304.25" r="5.1"/><circle cx="741.2" cy="310.55" r="5.1"/><circle cx="741.2" cy="316.85" r="5.1"/><circle cx="741.2" cy="323.14" r="5.1"/><circle cx="741.2" cy="329.44" r="5.1"/><circle cx="741.2" cy="335.73" r="5.1"/><circle cx="741.2" cy="342.03" r="5.1"/><circle cx="741.2" cy="348.32" r="5.1"/><circle cx="741.2" cy="354.62" r="5.1"/><circle cx="741.2" cy="360.91" r="5.1"/><circle cx="741.2" cy="367.21" r="5.1"/><circle cx="741.2" cy="373.50" r="5.1"/><circle cx="741.2" cy="379.80" r="5.1"/><circle cx="741.2" cy="386.09" r="5.1"/><circle cx="741.2" cy="392.39" r="5.1"/><circle cx="741.2" cy="398.68" r="5.1"/><circle cx="741.2" cy="404.98" r="5.1"/><circle cx="741.2" cy="411.27" r="5.1"/><circle cx="741.2" cy="417.57" r="5.1"/><circle cx="741.2" cy="423.87" r="5.1"/><circle cx="741.2" cy="430.16" r="5.1"/><circle cx="741.2" cy="436.46" r="5.1"/><circle cx="741.2" cy="442.75" r="5.1"/><circle cx="741.2" cy="449.05" r="5.1"/><circle cx="741.2" cy="455.34" r="5.1"/><circle cx="741.2" cy="461.64" r="5.1"/><circle cx="741.2" cy="467.93" r="5.1"/><circle cx="741.2" cy="474.23" r="5.1"/><circle cx="741.2" cy="480.52" r="5.1"/><circle cx="741.2" cy="486.82" r="5.1"/><circle cx="741.2" cy="493.11" r="5.1"/><circle cx="741.2" cy="499.41" r="5.1"/><circle cx="741.2" cy="505.70" r="5.1"/><path d="M736.1 512.0 A5.1 5.1 0 1 1 746.3 512.0 C746.3 515.0 742.2 518.3 741.2 520.3 C740.2 518.3 736.1 515.0 736.1 512.0Z"/></g>
<rect x="759.5" y="523.5" width="4.8" height="19.0" fill="#008000"/>
<g fill="#14ef62" stroke="#080808" stroke-width="1.3"><circle cx="761.9" cy="102.60" r="5.1"/><circle cx="761.9" cy="108.90" r="5.1"/><circle cx="761.9" cy="115.19" r="5.1"/><circle cx="761.9" cy="121.49" r="5.1"/><circle cx="761.9" cy="127.79" r="5.1"/><circle cx="761.9" cy="134.08" r="5.1"/><circle cx="761.9" cy="140.38" r="5.1"/><circle cx="761.9" cy="146.68" r="5.1"/><circle cx="761.9" cy="152.98" r="5.1"/><circle cx="761.9" cy="159.27" r="5.1"/><circle cx="761.9" cy="165.57" r="5.1"/><circle cx="761.9" cy="171.87" r="5.1"/><circle cx="761.9" cy="178.16" r="5.1"/><circle cx="761.9" cy="184.46" r="5.1"/><circle cx="761.9" cy="190.76" r="5.1"/><circle cx="761.9" cy="197.05" r="5.1"/><circle cx="761.9" cy="203.35" r="5.1"/><circle cx="761.9" cy="209.65" r="5.1"/><circle cx="761.9" cy="215.95" r="5.1"/><circle cx="761.9" cy="222.24" r="5.1"/><circle cx="761.9" cy="228.54" r="5.1"/><circle cx="761.9" cy="234.84" r="5.1"/><circle cx="761.9" cy="241.13" r="5.1"/><circle cx="761.9" cy="247.43" r="5.1"/><circle cx="761.9" cy="253.73" r="5.1"/><circle cx="761.9" cy="260.02" r="5.1"/><circle cx="761.9" cy="266.32" r="5.1"/><circle cx="761.9" cy="272.62" r="5.1"/><circle cx="761.9" cy="278.92" r="5.1"/><circle cx="761.9" cy="285.21" r="5.1"/><circle cx="761.9" cy="291.51" r="5.1"/><circle cx="761.9" cy="297.81" r="5.1"/><circle cx="761.9" cy="304.10" r="5.1"/><circle cx="761.9" cy="310.40" r="5.1"/><circle cx="761.9" cy="316.70" r="5.1"/><circle cx="761.9" cy="322.99" r="5.1"/><circle cx="761.9" cy="329.29" r="5.1"/><circle cx="761.9" cy="335.59" r="5.1"/><circle cx="761.9" cy="341.88" r="5.1"/><circle cx="761.9" cy="348.18" r="5.1"/><circle cx="761.9" cy="354.48" r="5.1"/><circle cx="761.9" cy="360.78" r="5.1"/><circle cx="761.9" cy="367.07" r="5.1"/><circle cx="761.9" cy="373.37" r="5.1"/><circle cx="761.9" cy="379.67" r="5.1"/><circle cx="761.9" cy="385.96" r="5.1"/><circle cx="761.9" cy="392.26" r="5.1"/><circle cx="761.9" cy="398.56" r="5.1"/><circle cx="761.9" cy="404.85" r="5.1"/><circle cx="761.9" cy="411.15" r="5.1"/><circle cx="761.9" cy="417.45" r="5.1"/><circle cx="761.9" cy="423.75" r="5.1"/><circle cx="761.9" cy="430.04" r="5.1"/><circle cx="761.9" cy="436.34" r="5.1"/><circle cx="761.9" cy="442.64" r="5.1"/><circle cx="761.9" cy="448.93" r="5.1"/><circle cx="761.9" cy="455.23" r="5.1"/><circle cx="761.9" cy="461.53" r="5.1"/><circle cx="761.9" cy="467.82" r="5.1"/><circle cx="761.9" cy="474.12" r="5.1"/><circle cx="761.9" cy="480.42" r="5.1"/><circle cx="761.9" cy="486.72" r="5.1"/><circle cx="761.9" cy="493.01" r="5.1"/><circle cx="761.9" cy="499.31" r="5.1"/><circle cx="761.9" cy="505.61" r="5.1"/><circle cx="761.9" cy="511.90" r="5.1"/><path d="M756.8 518.2 A5.1 5.1 0 1 1 767.0 518.2 C767.0 521.2 762.9 524.5 761.9 526.5 C760.9 524.5 756.8 521.2 756.8 518.2Z"/></g>
<rect x="780.8" y="598.0" width="4.8" height="19.0" fill="#0000ff"/>
<g fill="#14ef62" stroke="#080808" stroke-width="1.3"><circle cx="783.2" cy="102.60" r="5.1"/><circle cx="783.2" cy="108.88" r="5.1"/><circle cx="783.2" cy="115.17" r="5.1"/><circle cx="783.2" cy="121.45" r="5.1"/><circle cx="783.2" cy="127.73" r="5.1"/><circle cx="783.2" cy="134.02" r="5.1"/><circle cx="783.2" cy="140.30" r="5.1"/><circle cx="783.2" cy="146.58" r="5.1"/><circle cx="783.2" cy="152.87" r="5.1"/><circle cx="783.2" cy="159.15" r="5.1"/><circle cx="783.2" cy="165.43" r="5.1"/><circle cx="783.2" cy="171.72" r="5.1"/><circle cx="783.2" cy="178.00" r="5.1"/><circle cx="783.2" cy="184.28" r="5.1"/><circle cx="783.2" cy="190.57" r="5.1"/><circle cx="783.2" cy="196.85" r="5.1"/><circle cx="783.2" cy="203.13" r="5.1"/><circle cx="783.2" cy="209.42" r="5.1"/><circle cx="783.2" cy="215.70" r="5.1"/><circle cx="783.2" cy="221.98" r="5.1"/><circle cx="783.2" cy="228.27" r="5.1"/><circle cx="783.2" cy="234.55" r="5.1"/><circle cx="783.2" cy="240.83" r="5.1"/><circle cx="783.2" cy="247.12" r="5.1"/><circle cx="783.2" cy="253.40" r="5.1"/><circle cx="783.2" cy="259.68" r="5.1"/><circle cx="783.2" cy="265.97" r="5.1"/><circle cx="783.2" cy="272.25" r="5.1"/><circle cx="783.2" cy="278.53" r="5.1"/><circle cx="783.2" cy="284.82" r="5.1"/><circle cx="783.2" cy="291.10" r="5.1"/><circle cx="783.2" cy="297.38" r="5.1"/><circle cx="783.2" cy="303.67" r="5.1"/><circle cx="783.2" cy="309.95" r="5.1"/><circle cx="783.2" cy="316.23" r="5.1"/><circle cx="783.2" cy="322.52" r="5.1"/><circle cx="783.2" cy="328.80" r="5.1"/><circle cx="783.2" cy="335.08" r="5.1"/><circle cx="783.2" cy="341.37" r="5.1"/><circle cx="783.2" cy="347.65" r="5.1"/><circle cx="783.2" cy="353.93" r="5.1"/><circle cx="783.2" cy="360.22" r="5.1"/><circle cx="783.2" cy="366.50" r="5.1"/><circle cx="783.2" cy="372.78" r="5.1"/><circle cx="783.2" cy="379.07" r="5.1"/><circle cx="783.2" cy="385.35" r="5.1"/><circle cx="783.2" cy="391.63" r="5.1"/><circle cx="783.2" cy="397.92" r="5.1"/><circle cx="783.2" cy="404.20" r="5.1"/><circle cx="783.2" cy="410.48" r="5.1"/><circle cx="783.2" cy="416.77" r="5.1"/><circle cx="783.2" cy="423.05" r="5.1"/><circle cx="783.2" cy="429.33" r="5.1"/><circle cx="783.2" cy="435.62" r="5.1"/><circle cx="783.2" cy="441.90" r="5.1"/><circle cx="783.2" cy="448.18" r="5.1"/><circle cx="783.2" cy="454.47" r="5.1"/><circle cx="783.2" cy="460.75" r="5.1"/><circle cx="783.2" cy="467.03" r="5.1"/><circle cx="783.2" cy="473.32" r="5.1"/><circle cx="783.2" cy="479.60" r="5.1"/><circle cx="783.2" cy="485.88" r="5.1"/><circle cx="783.2" cy="492.17" r="5.1"/><circle cx="783.2" cy="498.45" r="5.1"/><circle cx="783.2" cy="504.73" r="5.1"/><circle cx="783.2" cy="511.02" r="5.1"/><circle cx="783.2" cy="517.30" r="5.1"/><circle cx="783.2" cy="523.58" r="5.1"/><circle cx="783.2" cy="529.87" r="5.1"/><circle cx="783.2" cy="536.15" r="5.1"/><circle cx="783.2" cy="542.43" r="5.1"/><circle cx="783.2" cy="548.72" r="5.1"/><circle cx="783.2" cy="555.00" r="5.1"/><circle cx="783.2" cy="561.28" r="5.1"/><circle cx="783.2" cy="567.57" r="5.1"/><circle cx="783.2" cy="573.85" r="5.1"/><circle cx="783.2" cy="580.13" r="5.1"/><circle cx="783.2" cy="586.42" r="5.1"/><path d="M778.1 592.7 A5.1 5.1 0 1 1 788.3 592.7 C788.3 595.7 784.2 599.0 783.2 601.0 C782.2 599.0 778.1 595.7 778.1 592.7Z"/></g>
<rect x="800.5" y="598.0" width="4.8" height="19.0" fill="#ffa500"/>
<g fill="#14ef62" stroke="#080808" stroke-width="1.3"><circle cx="802.9" cy="109.10" r="5.1"/><circle cx="802.9" cy="115.38" r="5.1"/><circle cx="802.9" cy="121.66" r="5.1"/><circle cx="802.9" cy="127.94" r="5.1"/><circle cx="802.9" cy="134.22" r="5.1"/><circle cx="802.9" cy="140.50" r="5.1"/><circle cx="802.9" cy="146.78" r="5.1"/><circle cx="802.9" cy="153.06" r="5.1"/><circle cx="802.9" cy="159.34" r="5.1"/><circle cx="802.9" cy="165.62" r="5.1"/><circle cx="802.9" cy="171.91" r="5.1"/><circle cx="802.9" cy="178.19" r="5.1"/><circle cx="802.9" cy="184.47" r="5.1"/><circle cx="802.9" cy="190.75" r="5.1"/><circle cx="802.9" cy="197.03" r="5.1"/><circle cx="802.9" cy="203.31" r="5.1"/><circle cx="802.9" cy="209.59" r="5.1"/><circle cx="802.9" cy="215.87" r="5.1"/><circle cx="802.9" cy="222.15" r="5.1"/><circle cx="802.9" cy="228.43" r="5.1"/><circle cx="802.9" cy="234.71" r="5.1"/><circle cx="802.9" cy="240.99" r="5.1"/><circle cx="802.9" cy="247.27" r="5.1"/><circle cx="802.9" cy="253.55" r="5.1"/><circle cx="802.9" cy="259.83" r="5.1"/><circle cx="802.9" cy="266.11" r="5.1"/><circle cx="802.9" cy="272.39" r="5.1"/><circle cx="802.9" cy="278.67" r="5.1"/><circle cx="802.9" cy="284.95" r="5.1"/><circle cx="802.9" cy="291.24" r="5.1"/><circle cx="802.9" cy="297.52" r="5.1"/><circle cx="802.9" cy="303.80" r="5.1"/><circle cx="802.9" cy="310.08" r="5.1"/><circle cx="802.9" cy="316.36" r="5.1"/><circle cx="802.9" cy="322.64" r="5.1"/><circle cx="802.9" cy="328.92" r="5.1"/><circle cx="802.9" cy="335.20" r="5.1"/><circle cx="802.9" cy="341.48" r="5.1"/><circle cx="802.9" cy="347.76" r="5.1"/><circle cx="802.9" cy="354.04" r="5.1"/><circle cx="802.9" cy="360.32" r="5.1"/><circle cx="802.9" cy="366.60" r="5.1"/><circle cx="802.9" cy="372.88" r="5.1"/><circle cx="802.9" cy="379.16" r="5.1"/><circle cx="802.9" cy="385.44" r="5.1"/><circle cx="802.9" cy="391.72" r="5.1"/><circle cx="802.9" cy="398.00" r="5.1"/><circle cx="802.9" cy="404.28" r="5.1"/><circle cx="802.9" cy="410.56" r="5.1"/><circle cx="802.9" cy="416.85" r="5.1"/><circle cx="802.9" cy="423.13" r="5.1"/><circle cx="802.9" cy="429.41" r="5.1"/><circle cx="802.9" cy="435.69" r="5.1"/><circle cx="802.9" cy="441.97" r="5.1"/><circle cx="802.9" cy="448.25" r="5.1"/><circle cx="802.9" cy="454.53" r="5.1"/><circle cx="802.9" cy="460.81" r="5.1"/><circle cx="802.9" cy="467.09" r="5.1"/><circle cx="802.9" cy="473.37" r="5.1"/><circle cx="802.9" cy="479.65" r="5.1"/><circle cx="802.9" cy="485.93" r="5.1"/><circle cx="802.9" cy="492.21" r="5.1"/><circle cx="802.9" cy="498.49" r="5.1"/><circle cx="802.9" cy="504.77" r="5.1"/><circle cx="802.9" cy="511.05" r="5.1"/><circle cx="802.9" cy="517.33" r="5.1"/><circle cx="802.9" cy="523.61" r="5.1"/><circle cx="802.9" cy="529.89" r="5.1"/><circle cx="802.9" cy="536.18" r="5.1"/><circle cx="802.9" cy="542.46" r="5.1"/><circle cx="802.9" cy="548.74" r="5.1"/><circle cx="802.9" cy="555.02" r="5.1"/><circle cx="802.9" cy="561.30" r="5.1"/><circle cx="802.9" cy="567.58" r="5.1"/><circle cx="802.9" cy="573.86" r="5.1"/><circle cx="802.9" cy="580.14" r="5.1"/><circle cx="802.9" cy="586.42" r="5.1"/><path d="M797.8 592.7 A5.1 5.1 0 1 1 808.0 592.7 C808.0 595.7 803.9 599.0 802.9 601.0 C801.9 599.0 797.8 595.7 797.8 592.7Z"/></g>
<rect x="821.2" y="598.0" width="4.8" height="19.0" fill="#a000d8"/>
<g fill="#14ef62" stroke="#080808" stroke-width="1.3"><circle cx="823.6" cy="141.10" r="5.1"/><circle cx="823.6" cy="147.37" r="5.1"/><circle cx="823.6" cy="153.64" r="5.1"/><circle cx="823.6" cy="159.92" r="5.1"/><circle cx="823.6" cy="166.19" r="5.1"/><circle cx="823.6" cy="172.46" r="5.1"/><circle cx="823.6" cy="178.73" r="5.1"/><circle cx="823.6" cy="185.01" r="5.1"/><circle cx="823.6" cy="191.28" r="5.1"/><circle cx="823.6" cy="197.55" r="5.1"/><circle cx="823.6" cy="203.82" r="5.1"/><circle cx="823.6" cy="210.09" r="5.1"/><circle cx="823.6" cy="216.37" r="5.1"/><circle cx="823.6" cy="222.64" r="5.1"/><circle cx="823.6" cy="228.91" r="5.1"/><circle cx="823.6" cy="235.18" r="5.1"/><circle cx="823.6" cy="241.46" r="5.1"/><circle cx="823.6" cy="247.73" r="5.1"/><circle cx="823.6" cy="254.00" r="5.1"/><circle cx="823.6" cy="260.27" r="5.1"/><circle cx="823.6" cy="266.54" r="5.1"/><circle cx="823.6" cy="272.82" r="5.1"/><circle cx="823.6" cy="279.09" r="5.1"/><circle cx="823.6" cy="285.36" r="5.1"/><circle cx="823.6" cy="291.63" r="5.1"/><circle cx="823.6" cy="297.91" r="5.1"/><circle cx="823.6" cy="304.18" r="5.1"/><circle cx="823.6" cy="310.45" r="5.1"/><circle cx="823.6" cy="316.72" r="5.1"/><circle cx="823.6" cy="322.99" r="5.1"/><circle cx="823.6" cy="329.27" r="5.1"/><circle cx="823.6" cy="335.54" r="5.1"/><circle cx="823.6" cy="341.81" r="5.1"/><circle cx="823.6" cy="348.08" r="5.1"/><circle cx="823.6" cy="354.36" r="5.1"/><circle cx="823.6" cy="360.63" r="5.1"/><circle cx="823.6" cy="366.90" r="5.1"/><circle cx="823.6" cy="373.17" r="5.1"/><circle cx="823.6" cy="379.44" r="5.1"/><circle cx="823.6" cy="385.72" r="5.1"/><circle cx="823.6" cy="391.99" r="5.1"/><circle cx="823.6" cy="398.26" r="5.1"/><circle cx="823.6" cy="404.53" r="5.1"/><circle cx="823.6" cy="410.81" r="5.1"/><circle cx="823.6" cy="417.08" r="5.1"/><circle cx="823.6" cy="423.35" r="5.1"/><circle cx="823.6" cy="429.62" r="5.1"/><circle cx="823.6" cy="435.89" r="5.1"/><circle cx="823.6" cy="442.17" r="5.1"/><circle cx="823.6" cy="448.44" r="5.1"/><circle cx="823.6" cy="454.71" r="5.1"/><circle cx="823.6" cy="460.98" r="5.1"/><circle cx="823.6" cy="467.26" r="5.1"/><circle cx="823.6" cy="473.53" r="5.1"/><circle cx="823.6" cy="479.80" r="5.1"/><circle cx="823.6" cy="486.07" r="5.1"/><circle cx="823.6" cy="492.34" r="5.1"/><circle cx="823.6" cy="498.62" r="5.1"/><circle cx="823.6" cy="504.89" r="5.1"/><circle cx="823.6" cy="511.16" r="5.1"/><circle cx="823.6" cy="517.43" r="5.1"/><circle cx="823.6" cy="523.71" r="5.1"/><circle cx="823.6" cy="529.98" r="5.1"/><circle cx="823.6" cy="536.25" r="5.1"/><circle cx="823.6" cy="542.52" r="5.1"/><circle cx="823.6" cy="548.79" r="5.1"/><circle cx="823.6" cy="555.07" r="5.1"/><circle cx="823.6" cy="561.34" r="5.1"/><circle cx="823.6" cy="567.61" r="5.1"/><circle cx="823.6" cy="573.88" r="5.1"/><circle cx="823.6" cy="580.16" r="5.1"/><circle cx="823.6" cy="586.43" r="5.1"/><path d="M818.5 592.7 A5.1 5.1 0 1 1 828.7 592.7 C828.7 595.7 824.6 599.0 823.6 601.0 C822.6 599.0 818.5 595.7 818.5 592.7Z"/></g>
<rect x="842.1" y="580.0" width="4.8" height="19.0" fill="#008080"/>
<g fill="#14ef62" stroke="#080808" stroke-width="1.3"><circle cx="844.5" cy="171.10" r="5.1"/><circle cx="844.5" cy="177.31" r="5.1"/><circle cx="844.5" cy="183.52" r="5.1"/><circle cx="844.5" cy="189.73" r="5.1"/><circle cx="844.5" cy="195.94" r="5.1"/><circle cx="844.5" cy="202.15" r="5.1"/><circle cx="844.5" cy="208.36" r="5.1"/><circle cx="844.5" cy="214.56" r="5.1"/><circle cx="844.5" cy="220.77" r="5.1"/><circle cx="844.5" cy="226.98" r="5.1"/><circle cx="844.5" cy="233.19" r="5.1"/><circle cx="844.5" cy="239.40" r="5.1"/><circle cx="844.5" cy="245.61" r="5.1"/><circle cx="844.5" cy="251.82" r="5.1"/><circle cx="844.5" cy="258.03" r="5.1"/><circle cx="844.5" cy="264.24" r="5.1"/><circle cx="844.5" cy="270.45" r="5.1"/><circle cx="844.5" cy="276.66" r="5.1"/><circle cx="844.5" cy="282.87" r="5.1"/><circle cx="844.5" cy="289.08" r="5.1"/><circle cx="844.5" cy="295.28" r="5.1"/><circle cx="844.5" cy="301.49" r="5.1"/><circle cx="844.5" cy="307.70" r="5.1"/><circle cx="844.5" cy="313.91" r="5.1"/><circle cx="844.5" cy="320.12" r="5.1"/><circle cx="844.5" cy="326.33" r="5.1"/><circle cx="844.5" cy="332.54" r="5.1"/><circle cx="844.5" cy="338.75" r="5.1"/><circle cx="844.5" cy="344.96" r="5.1"/><circle cx="844.5" cy="351.17" r="5.1"/><circle cx="844.5" cy="357.38" r="5.1"/><circle cx="844.5" cy="363.59" r="5.1"/><circle cx="844.5" cy="369.80" r="5.1"/><circle cx="844.5" cy="376.00" r="5.1"/><circle cx="844.5" cy="382.21" r="5.1"/><circle cx="844.5" cy="388.42" r="5.1"/><circle cx="844.5" cy="394.63" r="5.1"/><circle cx="844.5" cy="400.84" r="5.1"/><circle cx="844.5" cy="407.05" r="5.1"/><circle cx="844.5" cy="413.26" r="5.1"/><circle cx="844.5" cy="419.47" r="5.1"/><circle cx="844.5" cy="425.68" r="5.1"/><circle cx="844.5" cy="431.89" r="5.1"/><circle cx="844.5" cy="438.10" r="5.1"/><circle cx="844.5" cy="444.31" r="5.1"/><circle cx="844.5" cy="450.52" r="5.1"/><circle cx="844.5" cy="456.72" r="5.1"/><circle cx="844.5" cy="462.93" r="5.1"/><circle cx="844.5" cy="469.14" r="5.1"/><circle cx="844.5" cy="475.35" r="5.1"/><circle cx="844.5" cy="481.56" r="5.1"/><circle cx="844.5" cy="487.77" r="5.1"/><circle cx="844.5" cy="493.98" r="5.1"/><circle cx="844.5" cy="500.19" r="5.1"/><circle cx="844.5" cy="506.40" r="5.1"/><circle cx="844.5" cy="512.61" r="5.1"/><circle cx="844.5" cy="518.82" r="5.1"/><circle cx="844.5" cy="525.03" r="5.1"/><circle cx="844.5" cy="531.24" r="5.1"/><circle cx="844.5" cy="537.44" r="5.1"/><circle cx="844.5" cy="543.65" r="5.1"/><circle cx="844.5" cy="549.86" r="5.1"/><circle cx="844.5" cy="556.07" r="5.1"/><circle cx="844.5" cy="562.28" r="5.1"/><circle cx="844.5" cy="568.49" r="5.1"/><path d="M839.4 574.7 A5.1 5.1 0 1 1 849.6 574.7 C849.6 577.7 845.5 581.0 844.5 583.0 C843.5 581.0 839.4 577.7 839.4 574.7Z"/></g>
<rect x="863.0" y="598.0" width="4.8" height="19.0" fill="#ff0000"/>
<g fill="#14ef62" stroke="#080808" stroke-width="1.3"><circle cx="865.4" cy="184.60" r="5.1"/><circle cx="865.4" cy="190.88" r="5.1"/><circle cx="865.4" cy="197.16" r="5.1"/><circle cx="865.4" cy="203.44" r="5.1"/><circle cx="865.4" cy="209.71" r="5.1"/><circle cx="865.4" cy="215.99" r="5.1"/><circle cx="865.4" cy="222.27" r="5.1"/><circle cx="865.4" cy="228.55" r="5.1"/><circle cx="865.4" cy="234.83" r="5.1"/><circle cx="865.4" cy="241.11" r="5.1"/><circle cx="865.4" cy="247.38" r="5.1"/><circle cx="865.4" cy="253.66" r="5.1"/><circle cx="865.4" cy="259.94" r="5.1"/><circle cx="865.4" cy="266.22" r="5.1"/><circle cx="865.4" cy="272.50" r="5.1"/><circle cx="865.4" cy="278.78" r="5.1"/><circle cx="865.4" cy="285.06" r="5.1"/><circle cx="865.4" cy="291.33" r="5.1"/><circle cx="865.4" cy="297.61" r="5.1"/><circle cx="865.4" cy="303.89" r="5.1"/><circle cx="865.4" cy="310.17" r="5.1"/><circle cx="865.4" cy="316.45" r="5.1"/><circle cx="865.4" cy="322.73" r="5.1"/><circle cx="865.4" cy="329.00" r="5.1"/><circle cx="865.4" cy="335.28" r="5.1"/><circle cx="865.4" cy="341.56" r="5.1"/><circle cx="865.4" cy="347.84" r="5.1"/><circle cx="865.4" cy="354.12" r="5.1"/><circle cx="865.4" cy="360.40" r="5.1"/><circle cx="865.4" cy="366.68" r="5.1"/><circle cx="865.4" cy="372.95" r="5.1"/><circle cx="865.4" cy="379.23" r="5.1"/><circle cx="865.4" cy="385.51" r="5.1"/><circle cx="865.4" cy="391.79" r="5.1"/><circle cx="865.4" cy="398.07" r="5.1"/><circle cx="865.4" cy="404.35" r="5.1"/><circle cx="865.4" cy="410.62" r="5.1"/><circle cx="865.4" cy="416.90" r="5.1"/><circle cx="865.4" cy="423.18" r="5.1"/><circle cx="865.4" cy="429.46" r="5.1"/><circle cx="865.4" cy="435.74" r="5.1"/><circle cx="865.4" cy="442.02" r="5.1"/><circle cx="865.4" cy="448.30" r="5.1"/><circle cx="865.4" cy="454.57" r="5.1"/><circle cx="865.4" cy="460.85" r="5.1"/><circle cx="865.4" cy="467.13" r="5.1"/><circle cx="865.4" cy="473.41" r="5.1"/><circle cx="865.4" cy="479.69" r="5.1"/><circle cx="865.4" cy="485.97" r="5.1"/><circle cx="865.4" cy="492.24" r="5.1"/><circle cx="865.4" cy="498.52" r="5.1"/><circle cx="865.4" cy="504.80" r="5.1"/><circle cx="865.4" cy="511.08" r="5.1"/><circle cx="865.4" cy="517.36" r="5.1"/><circle cx="865.4" cy="523.64" r="5.1"/><circle cx="865.4" cy="529.92" r="5.1"/><circle cx="865.4" cy="536.19" r="5.1"/><circle cx="865.4" cy="542.47" r="5.1"/><circle cx="865.4" cy="548.75" r="5.1"/><circle cx="865.4" cy="555.03" r="5.1"/><circle cx="865.4" cy="561.31" r="5.1"/><circle cx="865.4" cy="567.59" r="5.1"/><circle cx="865.4" cy="573.86" r="5.1"/><circle cx="865.4" cy="580.14" r="5.1"/><circle cx="865.4" cy="586.42" r="5.1"/><path d="M860.3 592.7 A5.1 5.1 0 1 1 870.5 592.7 C870.5 595.7 866.4 599.0 865.4 601.0 C864.4 599.0 860.3 595.7 860.3 592.7Z"/></g>
<rect x="883.8" y="598.0" width="4.8" height="19.0" fill="#008000"/>
<g fill="#14ef62" stroke="#080808" stroke-width="1.3"><circle cx="886.2" cy="184.60" r="5.1"/><circle cx="886.2" cy="190.88" r="5.1"/><circle cx="886.2" cy="197.16" r="5.1"/><circle cx="886.2" cy="203.44" r="5.1"/><circle cx="886.2" cy="209.71" r="5.1"/><circle cx="886.2" cy="215.99" r="5.1"/><circle cx="886.2" cy="222.27" r="5.1"/><circle cx="886.2" cy="228.55" r="5.1"/><circle cx="886.2" cy="234.83" r="5.1"/><circle cx="886.2" cy="241.11" r="5.1"/><circle cx="886.2" cy="247.38" r="5.1"/><circle cx="886.2" cy="253.66" r="5.1"/><circle cx="886.2" cy="259.94" r="5.1"/><circle cx="886.2" cy="266.22" r="5.1"/><circle cx="886.2" cy="272.50" r="5.1"/><circle cx="886.2" cy="278.78" r="5.1"/><circle cx="886.2" cy="285.06" r="5.1"/><circle cx="886.2" cy="291.33" r="5.1"/><circle cx="886.2" cy="297.61" r="5.1"/><circle cx="886.2" cy="303.89" r="5.1"/><circle cx="886.2" cy="310.17" r="5.1"/><circle cx="886.2" cy="316.45" r="5.1"/><circle cx="886.2" cy="322.73" r="5.1"/><circle cx="886.2" cy="329.00" r="5.1"/><circle cx="886.2" cy="335.28" r="5.1"/><circle cx="886.2" cy="341.56" r="5.1"/><circle cx="886.2" cy="347.84" r="5.1"/><circle cx="886.2" cy="354.12" r="5.1"/><circle cx="886.2" cy="360.40" r="5.1"/><circle cx="886.2" cy="366.68" r="5.1"/><circle cx="886.2" cy="372.95" r="5.1"/><circle cx="886.2" cy="379.23" r="5.1"/><circle cx="886.2" cy="385.51" r="5.1"/><circle cx="886.2" cy="391.79" r="5.1"/><circle cx="886.2" cy="398.07" r="5.1"/><circle cx="886.2" cy="404.35" r="5.1"/><circle cx="886.2" cy="410.62" r="5.1"/><circle cx="886.2" cy="416.90" r="5.1"/><circle cx="886.2" cy="423.18" r="5.1"/><circle cx="886.2" cy="429.46" r="5.1"/><circle cx="886.2" cy="435.74" r="5.1"/><circle cx="886.2" cy="442.02" r="5.1"/><circle cx="886.2" cy="448.30" r="5.1"/><circle cx="886.2" cy="454.57" r="5.1"/><circle cx="886.2" cy="460.85" r="5.1"/><circle cx="886.2" cy="467.13" r="5.1"/><circle cx="886.2" cy="473.41" r="5.1"/><circle cx="886.2" cy="479.69" r="5.1"/><circle cx="886.2" cy="485.97" r="5.1"/><circle cx="886.2" cy="492.24" r="5.1"/><circle cx="886.2" cy="498.52" r="5.1"/><circle cx="886.2" cy="504.80" r="5.1"/><circle cx="886.2" cy="511.08" r="5.1"/><circle cx="886.2" cy="517.36" r="5.1"/><circle cx="886.2" cy="523.64" r="5.1"/><circle cx="886.2" cy="529.92" r="5.1"/><circle cx="886.2" cy="536.19" r="5.1"/><circle cx="886.2" cy="542.47" r="5.1"/><circle cx="886.2" cy="548.75" r="5.1"/><circle cx="886.2" cy="555.03" r="5.1"/><circle cx="886.2" cy="561.31" r="5.1"/><circle cx="886.2" cy="567.59" r="5.1"/><circle cx="886.2" cy="573.86" r="5.1"/><circle cx="886.2" cy="580.14" r="5.1"/><circle cx="886.2" cy="586.42" r="5.1"/><path d="M881.1 592.7 A5.1 5.1 0 1 1 891.3 592.7 C891.3 595.7 887.2 599.0 886.2 601.0 C885.2 599.0 881.1 595.7 881.1 592.7Z"/></g>
<rect x="904.4" y="591.0" width="4.8" height="19.0" fill="#0000ff"/>
<g fill="#14ef62" stroke="#080808" stroke-width="1.3"><circle cx="906.8" cy="189.60" r="5.1"/><circle cx="906.8" cy="195.89" r="5.1"/><circle cx="906.8" cy="202.17" r="5.1"/><circle cx="906.8" cy="208.46" r="5.1"/><circle cx="906.8" cy="214.75" r="5.1"/><circle cx="906.8" cy="221.04" r="5.1"/><circle cx="906.8" cy="227.32" r="5.1"/><circle cx="906.8" cy="233.61" r="5.1"/><circle cx="906.8" cy="239.90" r="5.1"/><circle cx="906.8" cy="246.19" r="5.1"/><circle cx="906.8" cy="252.47" r="5.1"/><circle cx="906.8" cy="258.76" r="5.1"/><circle cx="906.8" cy="265.05" r="5.1"/><circle cx="906.8" cy="271.33" r="5.1"/><circle cx="906.8" cy="277.62" r="5.1"/><circle cx="906.8" cy="283.91" r="5.1"/><circle cx="906.8" cy="290.20" r="5.1"/><circle cx="906.8" cy="296.48" r="5.1"/><circle cx="906.8" cy="302.77" r="5.1"/><circle cx="906.8" cy="309.06" r="5.1"/><circle cx="906.8" cy="315.35" r="5.1"/><circle cx="906.8" cy="321.63" r="5.1"/><circle cx="906.8" cy="327.92" r="5.1"/><circle cx="906.8" cy="334.21" r="5.1"/><circle cx="906.8" cy="340.50" r="5.1"/><circle cx="906.8" cy="346.78" r="5.1"/><circle cx="906.8" cy="353.07" r="5.1"/><circle cx="906.8" cy="359.36" r="5.1"/><circle cx="906.8" cy="365.64" r="5.1"/><circle cx="906.8" cy="371.93" r="5.1"/><circle cx="906.8" cy="378.22" r="5.1"/><circle cx="906.8" cy="384.51" r="5.1"/><circle cx="906.8" cy="390.79" r="5.1"/><circle cx="906.8" cy="397.08" r="5.1"/><circle cx="906.8" cy="403.37" r="5.1"/><circle cx="906.8" cy="409.66" r="5.1"/><circle cx="906.8" cy="415.94" r="5.1"/><circle cx="906.8" cy="422.23" r="5.1"/><circle cx="906.8" cy="428.52" r="5.1"/><circle cx="906.8" cy="434.80" r="5.1"/><circle cx="906.8" cy="441.09" r="5.1"/><circle cx="906.8" cy="447.38" r="5.1"/><circle cx="906.8" cy="453.67" r="5.1"/><circle cx="906.8" cy="459.95" r="5.1"/><circle cx="906.8" cy="466.24" r="5.1"/><circle cx="906.8" cy="472.53" r="5.1"/><circle cx="906.8" cy="478.82" r="5.1"/><circle cx="906.8" cy="485.10" r="5.1"/><circle cx="906.8" cy="491.39" r="5.1"/><circle cx="906.8" cy="497.68" r="5.1"/><circle cx="906.8" cy="503.97" r="5.1"/><circle cx="906.8" cy="510.25" r="5.1"/><circle cx="906.8" cy="516.54" r="5.1"/><circle cx="906.8" cy="522.83" r="5.1"/><circle cx="906.8" cy="529.11" r="5.1"/><circle cx="906.8" cy="535.40" r="5.1"/><circle cx="906.8" cy="541.69" r="5.1"/><circle cx="906.8" cy="547.98" r="5.1"/><circle cx="906.8" cy="554.26" r="5.1"/><circle cx="906.8" cy="560.55" r="5.1"/><circle cx="906.8" cy="566.84" r="5.1"/><circle cx="906.8" cy="573.13" r="5.1"/><circle cx="906.8" cy="579.41" r="5.1"/><path d="M901.7 585.7 A5.1 5.1 0 1 1 911.9 585.7 C911.9 588.7 907.8 592.0 906.8 594.0 C905.8 592.0 901.7 588.7 901.7 585.7Z"/></g>
<rect x="924.9" y="590.0" width="4.8" height="19.0" fill="#ffa500"/>
<g fill="#14ef62" stroke="#080808" stroke-width="1.3"><circle cx="927.3" cy="228.10" r="5.1"/><circle cx="927.3" cy="234.36" r="5.1"/><circle cx="927.3" cy="240.61" r="5.1"/><circle cx="927.3" cy="246.87" r="5.1"/><circle cx="927.3" cy="253.12" r="5.1"/><circle cx="927.3" cy="259.38" r="5.1"/><circle cx="927.3" cy="265.64" r="5.1"/><circle cx="927.3" cy="271.89" r="5.1"/><circle cx="927.3" cy="278.15" r="5.1"/><circle cx="927.3" cy="284.41" r="5.1"/><circle cx="927.3" cy="290.66" r="5.1"/><circle cx="927.3" cy="296.92" r="5.1"/><circle cx="927.3" cy="303.17" r="5.1"/><circle cx="927.3" cy="309.43" r="5.1"/><circle cx="927.3" cy="315.69" r="5.1"/><circle cx="927.3" cy="321.94" r="5.1"/><circle cx="927.3" cy="328.20" r="5.1"/><circle cx="927.3" cy="334.45" r="5.1"/><circle cx="927.3" cy="340.71" r="5.1"/><circle cx="927.3" cy="346.97" r="5.1"/><circle cx="927.3" cy="353.22" r="5.1"/><circle cx="927.3" cy="359.48" r="5.1"/><circle cx="927.3" cy="365.74" r="5.1"/><circle cx="927.3" cy="371.99" r="5.1"/><circle cx="927.3" cy="378.25" r="5.1"/><circle cx="927.3" cy="384.50" r="5.1"/><circle cx="927.3" cy="390.76" r="5.1"/><circle cx="927.3" cy="397.02" r="5.1"/><circle cx="927.3" cy="403.27" r="5.1"/><circle cx="927.3" cy="409.53" r="5.1"/><circle cx="927.3" cy="415.78" r="5.1"/><circle cx="927.3" cy="422.04" r="5.1"/><circle cx="927.3" cy="428.30" r="5.1"/><circle cx="927.3" cy="434.55" r="5.1"/><circle cx="927.3" cy="440.81" r="5.1"/><circle cx="927.3" cy="447.06" r="5.1"/><circle cx="927.3" cy="453.32" r="5.1"/><circle cx="927.3" cy="459.58" r="5.1"/><circle cx="927.3" cy="465.83" r="5.1"/><circle cx="927.3" cy="472.09" r="5.1"/><circle cx="927.3" cy="478.35" r="5.1"/><circle cx="927.3" cy="484.60" r="5.1"/><circle cx="927.3" cy="490.86" r="5.1"/><circle cx="927.3" cy="497.11" r="5.1"/><circle cx="927.3" cy="503.37" r="5.1"/><circle cx="927.3" cy="509.63" r="5.1"/><circle cx="927.3" cy="515.88" r="5.1"/><circle cx="927.3" cy="522.14" r="5.1"/><circle cx="927.3" cy="528.39" r="5.1"/><circle cx="927.3" cy="534.65" r="5.1"/><circle cx="927.3" cy="540.91" r="5.1"/><circle cx="927.3" cy="547.16" r="5.1"/><circle cx="927.3" cy="553.42" r="5.1"/><circle cx="927.3" cy="559.68" r="5.1"/><circle cx="927.3" cy="565.93" r="5.1"/><circle cx="927.3" cy="572.19" r="5.1"/><circle cx="927.3" cy="578.44" r="5.1"/><path d="M922.2 584.7 A5.1 5.1 0 1 1 932.4 584.7 C932.4 587.7 928.3 591.0 927.3 593.0 C926.3 591.0 922.2 587.7 922.2 584.7Z"/></g>
<rect x="945.6" y="598.0" width="4.8" height="19.0" fill="#a000d8"/>
<g fill="#14ef62" stroke="#080808" stroke-width="1.3"><circle cx="948.0" cy="246.10" r="5.1"/><circle cx="948.0" cy="252.40" r="5.1"/><circle cx="948.0" cy="258.70" r="5.1"/><circle cx="948.0" cy="265.01" r="5.1"/><circle cx="948.0" cy="271.31" r="5.1"/><circle cx="948.0" cy="277.61" r="5.1"/><circle cx="948.0" cy="283.91" r="5.1"/><circle cx="948.0" cy="290.21" r="5.1"/><circle cx="948.0" cy="296.51" r="5.1"/><circle cx="948.0" cy="302.82" r="5.1"/><circle cx="948.0" cy="309.12" r="5.1"/><circle cx="948.0" cy="315.42" r="5.1"/><circle cx="948.0" cy="321.72" r="5.1"/><circle cx="948.0" cy="328.02" r="5.1"/><circle cx="948.0" cy="334.33" r="5.1"/><circle cx="948.0" cy="340.63" r="5.1"/><circle cx="948.0" cy="346.93" r="5.1"/><circle cx="948.0" cy="353.23" r="5.1"/><circle cx="948.0" cy="359.53" r="5.1"/><circle cx="948.0" cy="365.83" r="5.1"/><circle cx="948.0" cy="372.14" r="5.1"/><circle cx="948.0" cy="378.44" r="5.1"/><circle cx="948.0" cy="384.74" r="5.1"/><circle cx="948.0" cy="391.04" r="5.1"/><circle cx="948.0" cy="397.34" r="5.1"/><circle cx="948.0" cy="403.65" r="5.1"/><circle cx="948.0" cy="409.95" r="5.1"/><circle cx="948.0" cy="416.25" r="5.1"/><circle cx="948.0" cy="422.55" r="5.1"/><circle cx="948.0" cy="428.85" r="5.1"/><circle cx="948.0" cy="435.15" r="5.1"/><circle cx="948.0" cy="441.46" r="5.1"/><circle cx="948.0" cy="447.76" r="5.1"/><circle cx="948.0" cy="454.06" r="5.1"/><circle cx="948.0" cy="460.36" r="5.1"/><circle cx="948.0" cy="466.66" r="5.1"/><circle cx="948.0" cy="472.97" r="5.1"/><circle cx="948.0" cy="479.27" r="5.1"/><circle cx="948.0" cy="485.57" r="5.1"/><circle cx="948.0" cy="491.87" r="5.1"/><circle cx="948.0" cy="498.17" r="5.1"/><circle cx="948.0" cy="504.47" r="5.1"/><circle cx="948.0" cy="510.78" r="5.1"/><circle cx="948.0" cy="517.08" r="5.1"/><circle cx="948.0" cy="523.38" r="5.1"/><circle cx="948.0" cy="529.68" r="5.1"/><circle cx="948.0" cy="535.98" r="5.1"/><circle cx="948.0" cy="542.29" r="5.1"/><circle cx="948.0" cy="548.59" r="5.1"/><circle cx="948.0" cy="554.89" r="5.1"/><circle cx="948.0" cy="561.19" r="5.1"/><circle cx="948.0" cy="567.49" r="5.1"/><circle cx="948.0" cy="573.79" r="5.1"/><circle cx="948.0" cy="580.10" r="5.1"/><circle cx="948.0" cy="586.40" r="5.1"/><path d="M942.9 592.7 A5.1 5.1 0 1 1 953.1 592.7 C953.1 595.7 949.0 599.0 948.0 601.0 C947.0 599.0 942.9 595.7 942.9 592.7Z"/></g>
<rect x="966.3" y="598.0" width="4.8" height="19.0" fill="#008080"/>
<g fill="#14ef62" stroke="#080808" stroke-width="1.3"><circle cx="968.7" cy="282.60" r="5.1"/><circle cx="968.7" cy="288.80" r="5.1"/><circle cx="968.7" cy="295.00" r="5.1"/><circle cx="968.7" cy="301.21" r="5.1"/><circle cx="968.7" cy="307.41" r="5.1"/><circle cx="968.7" cy="313.61" r="5.1"/><circle cx="968.7" cy="319.81" r="5.1"/><circle cx="968.7" cy="326.01" r="5.1"/><circle cx="968.7" cy="332.22" r="5.1"/><circle cx="968.7" cy="338.42" r="5.1"/><circle cx="968.7" cy="344.62" r="5.1"/><circle cx="968.7" cy="350.82" r="5.1"/><circle cx="968.7" cy="357.02" r="5.1"/><circle cx="968.7" cy="363.23" r="5.1"/><circle cx="968.7" cy="369.43" r="5.1"/><circle cx="968.7" cy="375.63" r="5.1"/><circle cx="968.7" cy="381.83" r="5.1"/><circle cx="968.7" cy="388.03" r="5.1"/><circle cx="968.7" cy="394.24" r="5.1"/><circle cx="968.7" cy="400.44" r="5.1"/><circle cx="968.7" cy="406.64" r="5.1"/><circle cx="968.7" cy="412.84" r="5.1"/><circle cx="968.7" cy="419.04" r="5.1"/><circle cx="968.7" cy="425.25" r="5.1"/><circle cx="968.7" cy="431.45" r="5.1"/><circle cx="968.7" cy="437.65" r="5.1"/><circle cx="968.7" cy="443.85" r="5.1"/><circle cx="968.7" cy="450.05" r="5.1"/><circle cx="968.7" cy="456.26" r="5.1"/><circle cx="968.7" cy="462.46" r="5.1"/><circle cx="968.7" cy="468.66" r="5.1"/><circle cx="968.7" cy="474.86" r="5.1"/><circle cx="968.7" cy="481.06" r="5.1"/><circle cx="968.7" cy="487.27" r="5.1"/><circle cx="968.7" cy="493.47" r="5.1"/><circle cx="968.7" cy="499.67" r="5.1"/><circle cx="968.7" cy="505.87" r="5.1"/><circle cx="968.7" cy="512.07" r="5.1"/><circle cx="968.7" cy="518.28" r="5.1"/><circle cx="968.7" cy="524.48" r="5.1"/><circle cx="968.7" cy="530.68" r="5.1"/><circle cx="968.7" cy="536.88" r="5.1"/><circle cx="968.7" cy="543.08" r="5.1"/><circle cx="968.7" cy="549.29" r="5.1"/><circle cx="968.7" cy="555.49" r="5.1"/><circle cx="968.7" cy="561.69" r="5.1"/><circle cx="968.7" cy="567.89" r="5.1"/><circle cx="968.7" cy="574.09" r="5.1"/><circle cx="968.7" cy="580.30" r="5.1"/><circle cx="968.7" cy="586.50" r="5.1"/><path d="M963.6 592.7 A5.1 5.1 0 1 1 973.8 592.7 C973.8 595.7 969.7 599.0 968.7 601.0 C967.7 599.0 963.6 595.7 963.6 592.7Z"/></g>
<rect x="987.2" y="598.0" width="4.8" height="19.0" fill="#ff0000"/>
<g fill="#14ef62" stroke="#080808" stroke-width="1.3"><circle cx="989.6" cy="289.60" r="5.1"/><circle cx="989.6" cy="295.91" r="5.1"/><circle cx="989.6" cy="302.23" r="5.1"/><circle cx="989.6" cy="308.54" r="5.1"/><circle cx="989.6" cy="314.86" r="5.1"/><circle cx="989.6" cy="321.17" r="5.1"/><circle cx="989.6" cy="327.49" r="5.1"/><circle cx="989.6" cy="333.80" r="5.1"/><circle cx="989.6" cy="340.12" r="5.1"/><circle cx="989.6" cy="346.43" r="5.1"/><circle cx="989.6" cy="352.75" r="5.1"/><circle cx="989.6" cy="359.06" r="5.1"/><circle cx="989.6" cy="365.38" r="5.1"/><circle cx="989.6" cy="371.69" r="5.1"/><circle cx="989.6" cy="378.00" r="5.1"/><circle cx="989.6" cy="384.32" r="5.1"/><circle cx="989.6" cy="390.63" r="5.1"/><circle cx="989.6" cy="396.95" r="5.1"/><circle cx="989.6" cy="403.26" r="5.1"/><circle cx="989.6" cy="409.58" r="5.1"/><circle cx="989.6" cy="415.89" r="5.1"/><circle cx="989.6" cy="422.21" r="5.1"/><circle cx="989.6" cy="428.52" r="5.1"/><circle cx="989.6" cy="434.84" r="5.1"/><circle cx="989.6" cy="441.15" r="5.1"/><circle cx="989.6" cy="447.46" r="5.1"/><circle cx="989.6" cy="453.78" r="5.1"/><circle cx="989.6" cy="460.09" r="5.1"/><circle cx="989.6" cy="466.41" r="5.1"/><circle cx="989.6" cy="472.72" r="5.1"/><circle cx="989.6" cy="479.04" r="5.1"/><circle cx="989.6" cy="485.35" r="5.1"/><circle cx="989.6" cy="491.67" r="5.1"/><circle cx="989.6" cy="497.98" r="5.1"/><circle cx="989.6" cy="504.30" r="5.1"/><circle cx="989.6" cy="510.61" r="5.1"/><circle cx="989.6" cy="516.93" r="5.1"/><circle cx="989.6" cy="523.24" r="5.1"/><circle cx="989.6" cy="529.55" r="5.1"/><circle cx="989.6" cy="535.87" r="5.1"/><circle cx="989.6" cy="542.18" r="5.1"/><circle cx="989.6" cy="548.50" r="5.1"/><circle cx="989.6" cy="554.81" r="5.1"/><circle cx="989.6" cy="561.13" r="5.1"/><circle cx="989.6" cy="567.44" r="5.1"/><circle cx="989.6" cy="573.76" r="5.1"/><circle cx="989.6" cy="580.07" r="5.1"/><circle cx="989.6" cy="586.39" r="5.1"/><path d="M984.5 592.7 A5.1 5.1 0 1 1 994.7 592.7 C994.7 595.7 990.6 599.0 989.6 601.0 C988.6 599.0 984.5 595.7 984.5 592.7Z"/></g>
<rect x="1008.6" y="585.7" width="4.8" height="19.0" fill="#008000"/>
<g fill="#14ef62" stroke="#080808" stroke-width="1.3"><circle cx="1011.0" cy="315.60" r="5.1"/><circle cx="1011.0" cy="321.90" r="5.1"/><circle cx="1011.0" cy="328.21" r="5.1"/><circle cx="1011.0" cy="334.51" r="5.1"/><circle cx="1011.0" cy="340.82" r="5.1"/><circle cx="1011.0" cy="347.12" r="5.1"/><circle cx="1011.0" cy="353.43" r="5.1"/><circle cx="1011.0" cy="359.73" r="5.1"/><circle cx="1011.0" cy="366.04" r="5.1"/><circle cx="1011.0" cy="372.34" r="5.1"/><circle cx="1011.0" cy="378.65" r="5.1"/><circle cx="1011.0" cy="384.95" r="5.1"/><circle cx="1011.0" cy="391.26" r="5.1"/><circle cx="1011.0" cy="397.56" r="5.1"/><circle cx="1011.0" cy="403.87" r="5.1"/><circle cx="1011.0" cy="410.17" r="5.1"/><circle cx="1011.0" cy="416.48" r="5.1"/><circle cx="1011.0" cy="422.78" r="5.1"/><circle cx="1011.0" cy="429.09" r="5.1"/><circle cx="1011.0" cy="435.39" r="5.1"/><circle cx="1011.0" cy="441.70" r="5.1"/><circle cx="1011.0" cy="448.00" r="5.1"/><circle cx="1011.0" cy="454.30" r="5.1"/><circle cx="1011.0" cy="460.61" r="5.1"/><circle cx="1011.0" cy="466.91" r="5.1"/><circle cx="1011.0" cy="473.22" r="5.1"/><circle cx="1011.0" cy="479.52" r="5.1"/><circle cx="1011.0" cy="485.83" r="5.1"/><circle cx="1011.0" cy="492.13" r="5.1"/><circle cx="1011.0" cy="498.44" r="5.1"/><circle cx="1011.0" cy="504.74" r="5.1"/><circle cx="1011.0" cy="511.05" r="5.1"/><circle cx="1011.0" cy="517.35" r="5.1"/><circle cx="1011.0" cy="523.66" r="5.1"/><circle cx="1011.0" cy="529.96" r="5.1"/><circle cx="1011.0" cy="536.27" r="5.1"/><circle cx="1011.0" cy="542.57" r="5.1"/><circle cx="1011.0" cy="548.88" r="5.1"/><circle cx="1011.0" cy="555.18" r="5.1"/><circle cx="1011.0" cy="561.49" r="5.1"/><circle cx="1011.0" cy="567.79" r="5.1"/><circle cx="1011.0" cy="574.10" r="5.1"/><path d="M1005.9 580.4 A5.1 5.1 0 1 1 1016.1 580.4 C1016.1 583.4 1012.0 586.7 1011.0 588.7 C1010.0 586.7 1005.9 583.4 1005.9 580.4Z"/></g>
<rect x="1028.5" y="598.0" width="4.8" height="19.0" fill="#0000ff"/>
<g fill="#14ef62" stroke="#080808" stroke-width="1.3"><circle cx="1030.9" cy="332.60" r="5.1"/><circle cx="1030.9" cy="338.79" r="5.1"/><circle cx="1030.9" cy="344.99" r="5.1"/><circle cx="1030.9" cy="351.18" r="5.1"/><circle cx="1030.9" cy="357.37" r="5.1"/><circle cx="1030.9" cy="363.56" r="5.1"/><circle cx="1030.9" cy="369.76" r="5.1"/><circle cx="1030.9" cy="375.95" r="5.1"/><circle cx="1030.9" cy="382.14" r="5.1"/><circle cx="1030.9" cy="388.34" r="5.1"/><circle cx="1030.9" cy="394.53" r="5.1"/><circle cx="1030.9" cy="400.72" r="5.1"/><circle cx="1030.9" cy="406.91" r="5.1"/><circle cx="1030.9" cy="413.11" r="5.1"/><circle cx="1030.9" cy="419.30" r="5.1"/><circle cx="1030.9" cy="425.49" r="5.1"/><circle cx="1030.9" cy="431.69" r="5.1"/><circle cx="1030.9" cy="437.88" r="5.1"/><circle cx="1030.9" cy="444.07" r="5.1"/><circle cx="1030.9" cy="450.26" r="5.1"/><circle cx="1030.9" cy="456.46" r="5.1"/><circle cx="1030.9" cy="462.65" r="5.1"/><circle cx="1030.9" cy="468.84" r="5.1"/><circle cx="1030.9" cy="475.04" r="5.1"/><circle cx="1030.9" cy="481.23" r="5.1"/><circle cx="1030.9" cy="487.42" r="5.1"/><circle cx="1030.9" cy="493.61" r="5.1"/><circle cx="1030.9" cy="499.81" r="5.1"/><circle cx="1030.9" cy="506.00" r="5.1"/><circle cx="1030.9" cy="512.19" r="5.1"/><circle cx="1030.9" cy="518.39" r="5.1"/><circle cx="1030.9" cy="524.58" r="5.1"/><circle cx="1030.9" cy="530.77" r="5.1"/><circle cx="1030.9" cy="536.96" r="5.1"/><circle cx="1030.9" cy="543.16" r="5.1"/><circle cx="1030.9" cy="549.35" r="5.1"/><circle cx="1030.9" cy="555.54" r="5.1"/><circle cx="1030.9" cy="561.74" r="5.1"/><circle cx="1030.9" cy="567.93" r="5.1"/><circle cx="1030.9" cy="574.12" r="5.1"/><circle cx="1030.9" cy="580.31" r="5.1"/><circle cx="1030.9" cy="586.51" r="5.1"/><path d="M1025.8 592.7 A5.1 5.1 0 1 1 1036.0 592.7 C1036.0 595.7 1031.9 599.0 1030.9 601.0 C1029.9 599.0 1025.8 595.7 1025.8 592.7Z"/></g>
<rect x="1048.9" y="598.0" width="4.8" height="19.0" fill="#ffa500"/>
<g fill="#14ef62" stroke="#080808" stroke-width="1.3"><circle cx="1051.3" cy="352.60" r="5.1"/><circle cx="1051.3" cy="358.92" r="5.1"/><circle cx="1051.3" cy="365.24" r="5.1"/><circle cx="1051.3" cy="371.56" r="5.1"/><circle cx="1051.3" cy="377.87" r="5.1"/><circle cx="1051.3" cy="384.19" r="5.1"/><circle cx="1051.3" cy="390.51" r="5.1"/><circle cx="1051.3" cy="396.83" r="5.1"/><circle cx="1051.3" cy="403.15" r="5.1"/><circle cx="1051.3" cy="409.47" r="5.1"/><circle cx="1051.3" cy="415.78" r="5.1"/><circle cx="1051.3" cy="422.10" r="5.1"/><circle cx="1051.3" cy="428.42" r="5.1"/><circle cx="1051.3" cy="434.74" r="5.1"/><circle cx="1051.3" cy="441.06" r="5.1"/><circle cx="1051.3" cy="447.38" r="5.1"/><circle cx="1051.3" cy="453.69" r="5.1"/><circle cx="1051.3" cy="460.01" r="5.1"/><circle cx="1051.3" cy="466.33" r="5.1"/><circle cx="1051.3" cy="472.65" r="5.1"/><circle cx="1051.3" cy="478.97" r="5.1"/><circle cx="1051.3" cy="485.29" r="5.1"/><circle cx="1051.3" cy="491.61" r="5.1"/><circle cx="1051.3" cy="497.92" r="5.1"/><circle cx="1051.3" cy="504.24" r="5.1"/><circle cx="1051.3" cy="510.56" r="5.1"/><circle cx="1051.3" cy="516.88" r="5.1"/><circle cx="1051.3" cy="523.20" r="5.1"/><circle cx="1051.3" cy="529.52" r="5.1"/><circle cx="1051.3" cy="535.83" r="5.1"/><circle cx="1051.3" cy="542.15" r="5.1"/><circle cx="1051.3" cy="548.47" r="5.1"/><circle cx="1051.3" cy="554.79" r="5.1"/><circle cx="1051.3" cy="561.11" r="5.1"/><circle cx="1051.3" cy="567.43" r="5.1"/><circle cx="1051.3" cy="573.74" r="5.1"/><circle cx="1051.3" cy="580.06" r="5.1"/><circle cx="1051.3" cy="586.38" r="5.1"/><path d="M1046.2 592.7 A5.1 5.1 0 1 1 1056.4 592.7 C1056.4 595.7 1052.3 599.0 1051.3 601.0 C1050.3 599.0 1046.2 595.7 1046.2 592.7Z"/></g>
<rect x="1069.6" y="598.0" width="4.8" height="19.0" fill="#a000d8"/>
<g fill="#14ef62" stroke="#080808" stroke-width="1.3"><circle cx="1072.0" cy="363.80" r="5.1"/><circle cx="1072.0" cy="369.99" r="5.1"/><circle cx="1072.0" cy="376.17" r="5.1"/><circle cx="1072.0" cy="382.36" r="5.1"/><circle cx="1072.0" cy="388.55" r="5.1"/><circle cx="1072.0" cy="394.73" r="5.1"/><circle cx="1072.0" cy="400.92" r="5.1"/><circle cx="1072.0" cy="407.11" r="5.1"/><circle cx="1072.0" cy="413.29" r="5.1"/><circle cx="1072.0" cy="419.48" r="5.1"/><circle cx="1072.0" cy="425.66" r="5.1"/><circle cx="1072.0" cy="431.85" r="5.1"/><circle cx="1072.0" cy="438.04" r="5.1"/><circle cx="1072.0" cy="444.22" r="5.1"/><circle cx="1072.0" cy="450.41" r="5.1"/><circle cx="1072.0" cy="456.60" r="5.1"/><circle cx="1072.0" cy="462.78" r="5.1"/><circle cx="1072.0" cy="468.97" r="5.1"/><circle cx="1072.0" cy="475.16" r="5.1"/><circle cx="1072.0" cy="481.34" r="5.1"/><circle cx="1072.0" cy="487.53" r="5.1"/><circle cx="1072.0" cy="493.72" r="5.1"/><circle cx="1072.0" cy="499.90" r="5.1"/><circle cx="1072.0" cy="506.09" r="5.1"/><circle cx="1072.0" cy="512.28" r="5.1"/><circle cx="1072.0" cy="518.46" r="5.1"/><circle cx="1072.0" cy="524.65" r="5.1"/><circle cx="1072.0" cy="530.84" r="5.1"/><circle cx="1072.0" cy="537.02" r="5.1"/><circle cx="1072.0" cy="543.21" r="5.1"/><circle cx="1072.0" cy="549.39" r="5.1"/><circle cx="1072.0" cy="555.58" r="5.1"/><circle cx="1072.0" cy="561.77" r="5.1"/><circle cx="1072.0" cy="567.95" r="5.1"/><circle cx="1072.0" cy="574.14" r="5.1"/><circle cx="1072.0" cy="580.33" r="5.1"/><circle cx="1072.0" cy="586.51" r="5.1"/><path d="M1066.9 592.7 A5.1 5.1 0 1 1 1077.1 592.7 C1077.1 595.7 1073.0 599.0 1072.0 601.0 C1071.0 599.0 1066.9 595.7 1066.9 592.7Z"/></g>
<rect x="1090.6" y="598.0" width="4.8" height="19.0" fill="#008080"/>
<g fill="#14ef62" stroke="#080808" stroke-width="1.3"><circle cx="1093.0" cy="363.80" r="5.1"/><circle cx="1093.0" cy="369.99" r="5.1"/><circle cx="1093.0" cy="376.17" r="5.1"/><circle cx="1093.0" cy="382.36" r="5.1"/><circle cx="1093.0" cy="388.55" r="5.1"/><circle cx="1093.0" cy="394.73" r="5.1"/><circle cx="1093.0" cy="400.92" r="5.1"/><circle cx="1093.0" cy="407.11" r="5.1"/><circle cx="1093.0" cy="413.29" r="5.1"/><circle cx="1093.0" cy="419.48" r="5.1"/><circle cx="1093.0" cy="425.66" r="5.1"/><circle cx="1093.0" cy="431.85" r="5.1"/><circle cx="1093.0" cy="438.04" r="5.1"/><circle cx="1093.0" cy="444.22" r="5.1"/><circle cx="1093.0" cy="450.41" r="5.1"/><circle cx="1093.0" cy="456.60" r="5.1"/><circle cx="1093.0" cy="462.78" r="5.1"/><circle cx="1093.0" cy="468.97" r="5.1"/><circle cx="1093.0" cy="475.16" r="5.1"/><circle cx="1093.0" cy="481.34" r="5.1"/><circle cx="1093.0" cy="487.53" r="5.1"/><circle cx="1093.0" cy="493.72" r="5.1"/><circle cx="1093.0" cy="499.90" r="5.1"/><circle cx="1093.0" cy="506.09" r="5.1"/><circle cx="1093.0" cy="512.28" r="5.1"/><circle cx="1093.0" cy="518.46" r="5.1"/><circle cx="1093.0" cy="524.65" r="5.1"/><circle cx="1093.0" cy="530.84" r="5.1"/><circle cx="1093.0" cy="537.02" r="5.1"/><circle cx="1093.0" cy="543.21" r="5.1"/><circle cx="1093.0" cy="549.39" r="5.1"/><circle cx="1093.0" cy="555.58" r="5.1"/><circle cx="1093.0" cy="561.77" r="5.1"/><circle cx="1093.0" cy="567.95" r="5.1"/><circle cx="1093.0" cy="574.14" r="5.1"/><circle cx="1093.0" cy="580.33" r="5.1"/><circle cx="1093.0" cy="586.51" r="5.1"/><path d="M1087.9 592.7 A5.1 5.1 0 1 1 1098.1 592.7 C1098.1 595.7 1094.0 599.0 1093.0 601.0 C1092.0 599.0 1087.9 595.7 1087.9 592.7Z"/></g>
<rect x="1112.2" y="610.4" width="4.8" height="19.0" fill="#ff0000"/>
<g fill="#14ef62" stroke="#080808" stroke-width="1.3"><circle cx="1114.6" cy="370.90" r="5.1"/><circle cx="1114.6" cy="377.23" r="5.1"/><circle cx="1114.6" cy="383.56" r="5.1"/><circle cx="1114.6" cy="389.89" r="5.1"/><circle cx="1114.6" cy="396.22" r="5.1"/><circle cx="1114.6" cy="402.55" r="5.1"/><circle cx="1114.6" cy="408.88" r="5.1"/><circle cx="1114.6" cy="415.21" r="5.1"/><circle cx="1114.6" cy="421.54" r="5.1"/><circle cx="1114.6" cy="427.87" r="5.1"/><circle cx="1114.6" cy="434.20" r="5.1"/><circle cx="1114.6" cy="440.53" r="5.1"/><circle cx="1114.6" cy="446.86" r="5.1"/><circle cx="1114.6" cy="453.19" r="5.1"/><circle cx="1114.6" cy="459.52" r="5.1"/><circle cx="1114.6" cy="465.85" r="5.1"/><circle cx="1114.6" cy="472.18" r="5.1"/><circle cx="1114.6" cy="478.51" r="5.1"/><circle cx="1114.6" cy="484.84" r="5.1"/><circle cx="1114.6" cy="491.16" r="5.1"/><circle cx="1114.6" cy="497.49" r="5.1"/><circle cx="1114.6" cy="503.82" r="5.1"/><circle cx="1114.6" cy="510.15" r="5.1"/><circle cx="1114.6" cy="516.48" r="5.1"/><circle cx="1114.6" cy="522.81" r="5.1"/><circle cx="1114.6" cy="529.14" r="5.1"/><circle cx="1114.6" cy="535.47" r="5.1"/><circle cx="1114.6" cy="541.80" r="5.1"/><circle cx="1114.6" cy="548.13" r="5.1"/><circle cx="1114.6" cy="554.46" r="5.1"/><circle cx="1114.6" cy="560.79" r="5.1"/><circle cx="1114.6" cy="567.12" r="5.1"/><circle cx="1114.6" cy="573.45" r="5.1"/><circle cx="1114.6" cy="579.78" r="5.1"/><circle cx="1114.6" cy="586.11" r="5.1"/><circle cx="1114.6" cy="592.44" r="5.1"/><circle cx="1114.6" cy="598.77" r="5.1"/><path d="M1109.5 605.1 A5.1 5.1 0 1 1 1119.7 605.1 C1119.7 608.1 1115.6 611.4 1114.6 613.4 C1113.6 611.4 1109.5 608.1 1109.5 605.1Z"/></g>
<rect x="1131.9" y="610.4" width="4.8" height="19.0" fill="#008000"/>
<g fill="#14ef62" stroke="#080808" stroke-width="1.3"><circle cx="1134.3" cy="451.10" r="5.1"/><circle cx="1134.3" cy="457.26" r="5.1"/><circle cx="1134.3" cy="463.42" r="5.1"/><circle cx="1134.3" cy="469.58" r="5.1"/><circle cx="1134.3" cy="475.74" r="5.1"/><circle cx="1134.3" cy="481.90" r="5.1"/><circle cx="1134.3" cy="488.06" r="5.1"/><circle cx="1134.3" cy="494.22" r="5.1"/><circle cx="1134.3" cy="500.38" r="5.1"/><circle cx="1134.3" cy="506.54" r="5.1"/><circle cx="1134.3" cy="512.70" r="5.1"/><circle cx="1134.3" cy="518.86" r="5.1"/><circle cx="1134.3" cy="525.02" r="5.1"/><circle cx="1134.3" cy="531.18" r="5.1"/><circle cx="1134.3" cy="537.34" r="5.1"/><circle cx="1134.3" cy="543.50" r="5.1"/><circle cx="1134.3" cy="549.66" r="5.1"/><circle cx="1134.3" cy="555.82" r="5.1"/><circle cx="1134.3" cy="561.98" r="5.1"/><circle cx="1134.3" cy="568.14" r="5.1"/><circle cx="1134.3" cy="574.30" r="5.1"/><circle cx="1134.3" cy="580.46" r="5.1"/><circle cx="1134.3" cy="586.62" r="5.1"/><circle cx="1134.3" cy="592.78" r="5.1"/><circle cx="1134.3" cy="598.94" r="5.1"/><path d="M1129.2 605.1 A5.1 5.1 0 1 1 1139.4 605.1 C1139.4 608.1 1135.3 611.4 1134.3 613.4 C1133.3 611.4 1129.2 608.1 1129.2 605.1Z"/></g>
<rect x="1152.3" y="610.4" width="4.8" height="19.0" fill="#0000ff"/>
<g fill="#14ef62" stroke="#080808" stroke-width="1.3"><circle cx="1154.7" cy="513.80" r="5.1"/><circle cx="1154.7" cy="519.89" r="5.1"/><circle cx="1154.7" cy="525.97" r="5.1"/><circle cx="1154.7" cy="532.06" r="5.1"/><circle cx="1154.7" cy="538.15" r="5.1"/><circle cx="1154.7" cy="544.23" r="5.1"/><circle cx="1154.7" cy="550.32" r="5.1"/><circle cx="1154.7" cy="556.41" r="5.1"/><circle cx="1154.7" cy="562.49" r="5.1"/><circle cx="1154.7" cy="568.58" r="5.1"/><circle cx="1154.7" cy="574.67" r="5.1"/><circle cx="1154.7" cy="580.75" r="5.1"/><circle cx="1154.7" cy="586.84" r="5.1"/><circle cx="1154.7" cy="592.93" r="5.1"/><circle cx="1154.7" cy="599.01" r="5.1"/><path d="M1149.6 605.1 A5.1 5.1 0 1 1 1159.8 605.1 C1159.8 608.1 1155.7 611.4 1154.7 613.4 C1153.7 611.4 1149.6 608.1 1149.6 605.1Z"/></g>
</g>
</svg>
<div id="dlg"><div class="title"><span>Zone A</span></div><svg style="position:absolute;left:265px;top:10px" width="11" height="11"><path d="M0.5 0.5 L10.5 10.5 M10.5 0.5 L0.5 10.5" stroke="#777" stroke-width="1.1"/></svg></div><div class="lbl" style="left:67px;top:96.5px">Couleur :</div><div style="position:absolute;left:118px;top:97px;width:16px;height:14px;border:2px solid #11922f;background:#52b96a"></div><div class="lbl" style="left:177px;top:96.5px">Nom :</div><div class="tb" style="left:215px;top:96px;width:95px;height:20px"><span class="sx">A</span></div><div style="position:absolute;left:312px;top:96px;width:20px;height:21px;border:1px solid #cfcfcf;background:#e6e6e6"><svg width="18" height="18" style="position:absolute;left:1px;top:1px"><rect x="3" y="3.5" width="12" height="11" fill="#9a7ad0" stroke="#6a46a8" stroke-width="1"/><rect x="6" y="4" width="6" height="4" fill="#fff"/><rect x="5.5" y="10" width="7" height="4" fill="#cdb8ee"/></svg></div><div class="lbl" style="left:67px;top:138.5px">Appareil photo :</div><div class="combo" style="left:152px;top:137px;width:176px;height:21px"><span class="sx">Phase One iXU-RS1000 70mm</span><svg style="position:absolute;left:162px;top:7px" width="10" height="7"><path d="M0.5 0.8 L5 5.3 L9.5 0.8" fill="none" stroke="#333" stroke-width="1.1"/></svg></div><div class="lbl" style="left:67px;top:168.5px">Résolution au sol :</div><div class="spin" style="left:228px;top:168px;width:99px;height:19px;background:#fff;border-color:#b8b8b8"><span class="sx" style="color:#000">12,00 cm/pixel</span><i class="sb"><b class="up"></b><b class="dn"></b></i></div><div class="lbl" style="left:67px;top:197.5px">Élevation moyenne du terrain :</div><div class="spin" style="left:251px;top:197px;width:75px;height:19px;background:#fff;border-color:#b8b8b8"><span class="sx" style="color:#000">23 m</span><i class="sb"><b class="up"></b><b class="dn"></b></i></div><div class="lbl" style="left:67px;top:225.5px">Taux de recouvrement longitudinal :</div><div class="spin" style="left:267px;top:225px;width:59px;height:19px;background:#fff;border-color:#b8b8b8"><span class="sx" style="color:#000">80 %</span><i class="sb"><b class="up"></b><b class="dn"></b></i></div><div class="lbl" style="left:67px;top:248.5px">Taux de recouvrement latéral :</div><div class="spin" style="left:267px;top:247px;width:59px;height:20px;background:#fff;border-color:#b8b8b8"><span class="sx" style="color:#000">50 %</span><i class="sb"><b class="up"></b><b class="dn"></b></i></div><div class="lbl" style="left:67px;top:275.5px">Distance fixe entre les points :</div><div class="spin" style="left:251px;top:275px;width:75px;height:19px;background:#fff;border-color:#b8b8b8"><span class="sx" style="color:#000">0 m</span><i class="sb"><b class="up"></b><b class="dn"></b></i></div><div class="lbl" style="left:67px;top:298.5px">Distance fixe entre les axes de vol :</div><div class="spin" style="left:251px;top:298px;width:75px;height:19px;background:#fff;border-color:#b8b8b8"><span class="sx" style="color:#000">0 m</span><i class="sb"><b class="up"></b><b class="dn"></b></i></div><div class="lbl" style="left:67px;top:326.5px">Orientation:</div><div class="radio" style="left:134px;top:328.5px"></div><div class="lbl" style="left:153px;top:327.5px">Optimale</div><div class="radio" style="left:134px;top:349.5px"><b></b></div><div class="lbl" style="left:153px;top:348.5px">Nord-Sud</div><div class="radio" style="left:134px;top:371.0px"></div><div class="lbl" style="left:153px;top:370.0px">Est-Ouest</div><div class="radio" style="left:134px;top:392.5px"></div><div class="lbl" style="left:153px;top:391.5px">Définie à</div><div class="spin" style="left:210px;top:390px;width:59px;height:19px;background:#f0f0f0;border-color:#cfcfcf"><span class="sx" style="color:#a8a8a8">0,0 °</span><i class="sb"><b class="up"></b><b class="dn"></b></i></div><div class="lbl" style="left:67px;top:430.5px">Optimiser :</div><div class="radio dis" style="left:134px;top:431.5px"><b></b></div><div class="lbl dlbl" style="left:153px;top:430.5px">La distance de vol</div><div class="radio dis" style="left:134px;top:453.0px"></div><div class="lbl dlbl" style="left:153px;top:452.0px">Le nombre de photos</div><div class="radio dis" style="left:134px;top:474.5px"></div><div class="lbl dlbl" style="left:153px;top:473.5px">Le nombre d'axes de vol</div><div class="chk" style="left:66px;top:508.1px"></div><div class="lbl" style="left:85px;top:507.1px">Optimiser la résolution</div><div class="chk" style="left:66px;top:529.1px"><svg width="11" height="11" style="position:absolute;left:0;top:0"><path d="M1.8 5.2 L4.3 8.2 L9.3 1.8" fill="none" stroke="#222" stroke-width="1.3"/></svg></div><div class="lbl" style="left:85px;top:528.1px">Optimiser le recouvrement à la périphérie</div><div class="chk" style="left:66px;top:550.5px"><svg width="11" height="11" style="position:absolute;left:0;top:0"><path d="M1.8 5.2 L4.3 8.2 L9.3 1.8" fill="none" stroke="#222" stroke-width="1.3"/></svg></div><div class="lbl" style="left:85px;top:549.5px">Éliminer les points hors limite</div><div class="chk" style="left:66px;top:572.1px"></div><div class="lbl" style="left:85px;top:571.1px">Altitude des axes de vol indépendante</div><div class="chk" style="left:66px;top:592.5px"></div><div class="lbl" style="left:85px;top:591.5px">Altitude relative</div><div class="btn" style="left:121px;top:629px;width:148px;height:21px"><span class="sx2">Recalculer</span></div><div class="lbl" style="left:62px;top:676.5px">Données techniques :</div><div id="techbox"></div><div id="tech">Distance : 479,66 km<br>&nbsp;<br>&nbsp;<br>&nbsp;<br>&nbsp;<br>Orientation : 0°<br>&nbsp;<br>Altitude / sol : 1818 m (5965 pieds)<br>&nbsp;<br>Altitude / niveau de la mer : 1841 m (6041 pieds)<br>&nbsp;<br>Résolution effective : 12 cm / pixels<br>&nbsp;<br>Fauchée de l'image : 1393 x 1045 m<br>&nbsp;<br>Taux de recouvrement longitudinal : 80 %<br>Taux de recouvrement latéral : 50 %<br>&nbsp;<br>Dévers longitudinal : 3,29° (5,7 %)<br>Dévers latéral : 10,84° (19,2 %)<br>Dévers maximal : 11,31° (20 %)<br>&nbsp;<br>Nombre d'axes de vol : 32<br>&nbsp;<br>Nombre de photos : 2130<br>&nbsp;<br>Taille de l'orthophoto : 52,09 GP (287790 x 180993<br>pixels)<br>&nbsp;<br>Appareil photo : 101,1 MP (53 x 40 mm) Ø 69,7 mm</div><div style="position:absolute;left:319px;top:698px;width:18px;height:417px;background:#f3f3f3;border-left:1px solid #e2e2e2"></div><svg style="position:absolute;left:318px;top:698px" width="19" height="417"><path d="M5 11 L9.5 6.5 L14 11" fill="none" stroke="#c4c4c4" stroke-width="1.2"/><path d="M5 406 L9.5 410.5 L14 406" fill="none" stroke="#c4c4c4" stroke-width="1.2"/></svg>
<div id="panel"></div><div class="tab" style="left:1327px;width:94px"><svg width="18" height="18" style="position:absolute;left:9px;top:19px"><path d="M8.5 1.5 L15 5.2 L15 12.8 L8.5 16.5 L2 12.8 L2 5.2Z" fill="#e4f6fc" stroke="#3a6298" stroke-width="1.2"/></svg><span class="sx" style="left:38px;top:22px">Zones (2)</span></div><div class="tab act" style="left:1421px;width:108px"><svg width="20" height="18" style="position:absolute;left:12px;top:18px"><path d="M1.5 16 C2.5 13.5 4.5 13 6 13.5 C8 14 8.5 11 7.5 10 C6.5 8.5 9 7 11 8 C13 9 14.5 7 13.5 5.5 C12.5 4 14 2 16 1.5" fill="none" stroke="#222" stroke-width="1.3"/></svg><span class="sx" style="left:42px;top:20px">Tracés (32)</span></div><div class="tab" style="left:1529px;width:80px"><svg width="14" height="22" style="position:absolute;left:14px;top:19px"><path d="M7 16 L3.3 8.5 A4.2 4.2 0 1 1 10.7 8.5 Z" fill="none" stroke="#222" stroke-width="1.2"/><circle cx="7" cy="6" r="1.3" fill="#222"/></svg><span class="sx" style="left:38px;top:22px">Points (</span></div><div id="tpanel"></div><div id="tbl"><div class="hd" style="left:8px">Tracé</div><div class="hd" style="left:77px">Progression</div><div class="hd" style="left:143px">Résolution</div><div class="hd" style="left:205px">Fauchée</div><div class="hd" style="left:259px">Alt</div><div class="vl" style="left:71px"></div><div class="vl" style="left:137px"></div><div class="vl" style="left:199px"></div><div class="vl" style="left:253px"></div><div class="row" style="top:25.5px"><div class="c0" style="background:#0000ff"><span class="sx">AA</span></div><div class="c1"><span class="sx">100 %<br>(16/16)</span></div><div class="c2"><span class="sx">12 cm</span></div><div class="c3"><span class="sx">1393 m</span></div><div class="c4"><span class="sx">60<br>(A)</span></div></div><div class="row" style="top:74.2px"><div class="c0" style="background:#007a00"><span class="sx">AB</span></div><div class="c1"><span class="sx">100 %<br>(26/26)</span></div><div class="c2"><span class="sx">12 cm</span></div><div class="c3"><span class="sx">1393 m</span></div><div class="c4"><span class="sx">60<br>(A)</span></div></div><div class="row" style="top:122.9px"><div class="c0" style="background:#ff0000"><span class="sx">AC</span></div><div class="c1"><span class="sx">100 %<br>(39/39)</span></div><div class="c2"><span class="sx">12 cm</span></div><div class="c3"><span class="sx">1393 m</span></div><div class="c4"><span class="sx">60<br>(A)</span></div></div><div class="row" style="top:171.6px"><div class="c0" style="background:#008080"><span class="sx">AD</span></div><div class="c1"><span class="sx">100 %<br>(38/38)</span></div><div class="c2"><span class="sx">12 cm</span></div><div class="c3"><span class="sx">1393 m</span></div><div class="c4"><span class="sx">60<br>(A)</span></div></div><div class="row" style="top:220.3px"><div class="c0" style="background:#a000d8"><span class="sx">AE</span></div><div class="c1"><span class="sx">100 %<br>(38/38)</span></div><div class="c2"><span class="sx">12 cm</span></div><div class="c3"><span class="sx">1393 m</span></div><div class="c4"><span class="sx">60<br>(A)</span></div></div><div class="row" style="top:269.0px"><div class="c0" style="background:#ffa500"><span class="sx">AF</span></div><div class="c1"><span class="sx">100 %<br>(40/40)</span></div><div class="c2"><span class="sx">12 cm</span></div><div class="c3"><span class="sx">1393 m</span></div><div class="c4"><span class="sx">60<br>(A)</span></div></div><div class="row" style="top:317.7px"><div class="c0" style="background:#0000ff"><span class="sx">AG</span></div><div class="c1"><span class="sx">100 %<br>(43/43)</span></div><div class="c2"><span class="sx">12 cm</span></div><div class="c3"><span class="sx">1393 m</span></div><div class="c4"><span class="sx">60<br>(A)</span></div></div><div class="row" style="top:366.4px"><div class="c0" style="background:#007a00"><span class="sx">AH</span></div><div class="c1"><span class="sx">100 %<br>(44/44)</span></div><div class="c2"><span class="sx">12 cm</span></div><div class="c3"><span class="sx">1393 m</span></div><div class="c4"><span class="sx">60<br>(A)</span></div></div><div class="row" style="top:415.1px"><div class="c0" style="background:#ff0000"><span class="sx">AI</span></div><div class="c1"><span class="sx">100 %<br>(50/50)</span></div><div class="c2"><span class="sx">12 cm</span></div><div class="c3"><span class="sx">1393 m</span></div><div class="c4"><span class="sx">60<br>(A)</span></div></div><div class="row" style="top:463.8px"><div class="c0" style="background:#008080"><span class="sx">AJ</span></div><div class="c1"><span class="sx">100 %<br>(51/51)</span></div><div class="c2"><span class="sx">12 cm</span></div><div class="c3"><span class="sx">1393 m</span></div><div class="c4"><span class="sx">60<br>(A)</span></div></div><div class="row" style="top:512.5px"><div class="c0" style="background:#a000d8"><span class="sx">AK</span></div><div class="c1"><span class="sx">100 %<br>(56/56)</span></div><div class="c2"><span class="sx">12 cm</span></div><div class="c3"><span class="sx">1393 m</span></div><div class="c4"><span class="sx">60<br>(A)</span></div></div><div class="row" style="top:561.2px"><div class="c0" style="background:#ffa500"><span class="sx">AL</span></div><div class="c1"><span class="sx">100 %<br>(59/59)</span></div><div class="c2"><span class="sx">12 cm</span></div><div class="c3"><span class="sx">1393 m</span></div><div class="c4"><span class="sx">60<br>(A)</span></div></div><div class="row" style="top:609.9px"><div class="c0" style="background:#0000ff"><span class="sx">AM</span></div><div class="c1"><span class="sx">100 %<br>(65/65)</span></div><div class="c2"><span class="sx">12 cm</span></div><div class="c3"><span class="sx">1393 m</span></div><div class="c4"><span class="sx">60<br>(A)</span></div></div><div class="row" style="top:658.6px"><div class="c0" style="background:#007a00"><span class="sx">AN</span></div><div class="c1"><span class="sx">100 %<br>(67/67)</span></div><div class="c2"><span class="sx">12 cm</span></div><div class="c3"><span class="sx">1393 m</span></div><div class="c4"><span class="sx">60<br>(A)</span></div></div><div class="row" style="top:707.3px"><div class="c0" style="background:#ff0000"><span class="sx">AO</span></div><div class="c1"><span class="sx">100 %<br>(67/67)</span></div><div class="c2"><span class="sx">12 cm</span></div><div class="c3"><span class="sx">1393 m</span></div><div class="c4"><span class="sx">60<br>(A)</span></div></div><div class="row" style="top:756.0px"><div class="c0" style="background:#008080"><span class="sx">AP</span></div><div class="c1"><span class="sx">100 %<br>(66/66)</span></div><div class="c2"><span class="sx">12 cm</span></div><div class="c3"><span class="sx">1393 m</span></div><div class="c4"><span class="sx">60<br>(A)</span></div></div><div class="row" style="top:804.7px"><div class="c0" style="background:#a000d8"><span class="sx">AQ</span></div><div class="c1"><span class="sx">100 %<br>(74/74)</span></div><div class="c2"><span class="sx">12 cm</span></div><div class="c3"><span class="sx">1393 m</span></div><div class="c4"><span class="sx">60<br>(A)</span></div></div><div class="row" style="top:853.4px"><div class="c0" style="background:#ffa500"><span class="sx">AR</span></div><div class="c1"><span class="sx">100 %<br>(79/79)</span></div><div class="c2"><span class="sx">12 cm</span></div><div class="c3"><span class="sx">1393 m</span></div><div class="c4"><span class="sx">60<br>(A)</span></div></div><div class="row" style="top:902.1px"><div class="c0" style="background:#0000ff"><span class="sx">AS</span></div><div class="c1"><span class="sx">100 %<br>(80/80)</span></div><div class="c2"><span class="sx">12 cm</span></div><div class="c3"><span class="sx">1393 m</span></div><div class="c4"><span class="sx">60<br>(A)</span></div></div><div class="row" style="top:950.8px"><div class="c0" style="background:#007a00"><span class="sx">AT</span></div><div class="c1"><span class="sx">100 %<br>(68/68)</span></div><div class="c2"><span class="sx">12 cm</span></div><div class="c3"><span class="sx">1393 m</span></div><div class="c4"><span class="sx">60<br>(A)</span></div></div><div class="row" style="top:999.5px"><div class="c0" style="background:#ff0000"><span class="sx">AU</span></div><div class="c1"><span class="sx">100 %<br>(66/66)</span></div><div class="c2"><span class="sx">12 cm</span></div><div class="c3"><span class="sx">1393 m</span></div><div class="c4"><span class="sx">60<br>(A)</span></div></div><div class="row" style="top:1048.2px"><div class="c0" style="background:#008080"><span class="sx">AV</span></div><div class="c1"><span class="sx">100 %<br>(63/63)</span></div><div class="c2"><span class="sx">12 cm</span></div><div class="c3"><span class="sx">1393 m</span></div><div class="c4"><span class="sx">60<br>(A)</span></div></div><div class="row" style="top:1096.9px"><div class="c0" style="background:#a000d8"><span class="sx">AW</span></div><div class="c1"><span class="sx">100 %<br>(56/56)</span></div><div class="c2"><span class="sx">12 cm</span></div><div class="c3"><span class="sx">1393 m</span></div><div class="c4"><span class="sx">60<br>(A)</span></div></div></div>
<div id="wm">
<div class="wmbox"></div>
<svg width="210" height="110" style="position:absolute;left:0;top:0">
<defs><filter id="wmsh" x="-10%" y="-20%" width="120%" height="140%"><feGaussianBlur in="SourceAlpha" stdDeviation="1.6"/><feOffset dx="1" dy="1.5" result="b"/><feFlood flood-color="#000" flood-opacity="0.75"/><feComposite in2="b" operator="in"/><feMerge><feMergeNode/><feMergeNode in="SourceGraphic"/></feMerge></filter></defs>
<g font-family="Liberation Sans" font-weight="bold" fill="#f4f4f4" stroke="#454545" stroke-width="2.2" paint-order="stroke" stroke-linejoin="round" filter="url(#wmsh)">
<text x="34" y="42" font-size="29" textLength="130" lengthAdjust="spacingAndGlyphs">L'Europe</text>
<text x="42" y="59" font-size="19" textLength="36" lengthAdjust="spacingAndGlyphs">vue</text>
<text x="53" y="75" font-size="19" textLength="24" lengthAdjust="spacingAndGlyphs">du</text>
<text x="82" y="76" font-size="31" textLength="57" lengthAdjust="spacingAndGlyphs">Ciel</text>
<text x="144" y="77" font-size="6" stroke-width="0.8" textLength="16" lengthAdjust="spacingAndGlyphs">SARL</text>
<text x="18" y="92" font-size="13" stroke-width="2" textLength="162" lengthAdjust="spacingAndGlyphs">www.leuropevueduciel.com</text>
</g></svg></div>
</body></html>
